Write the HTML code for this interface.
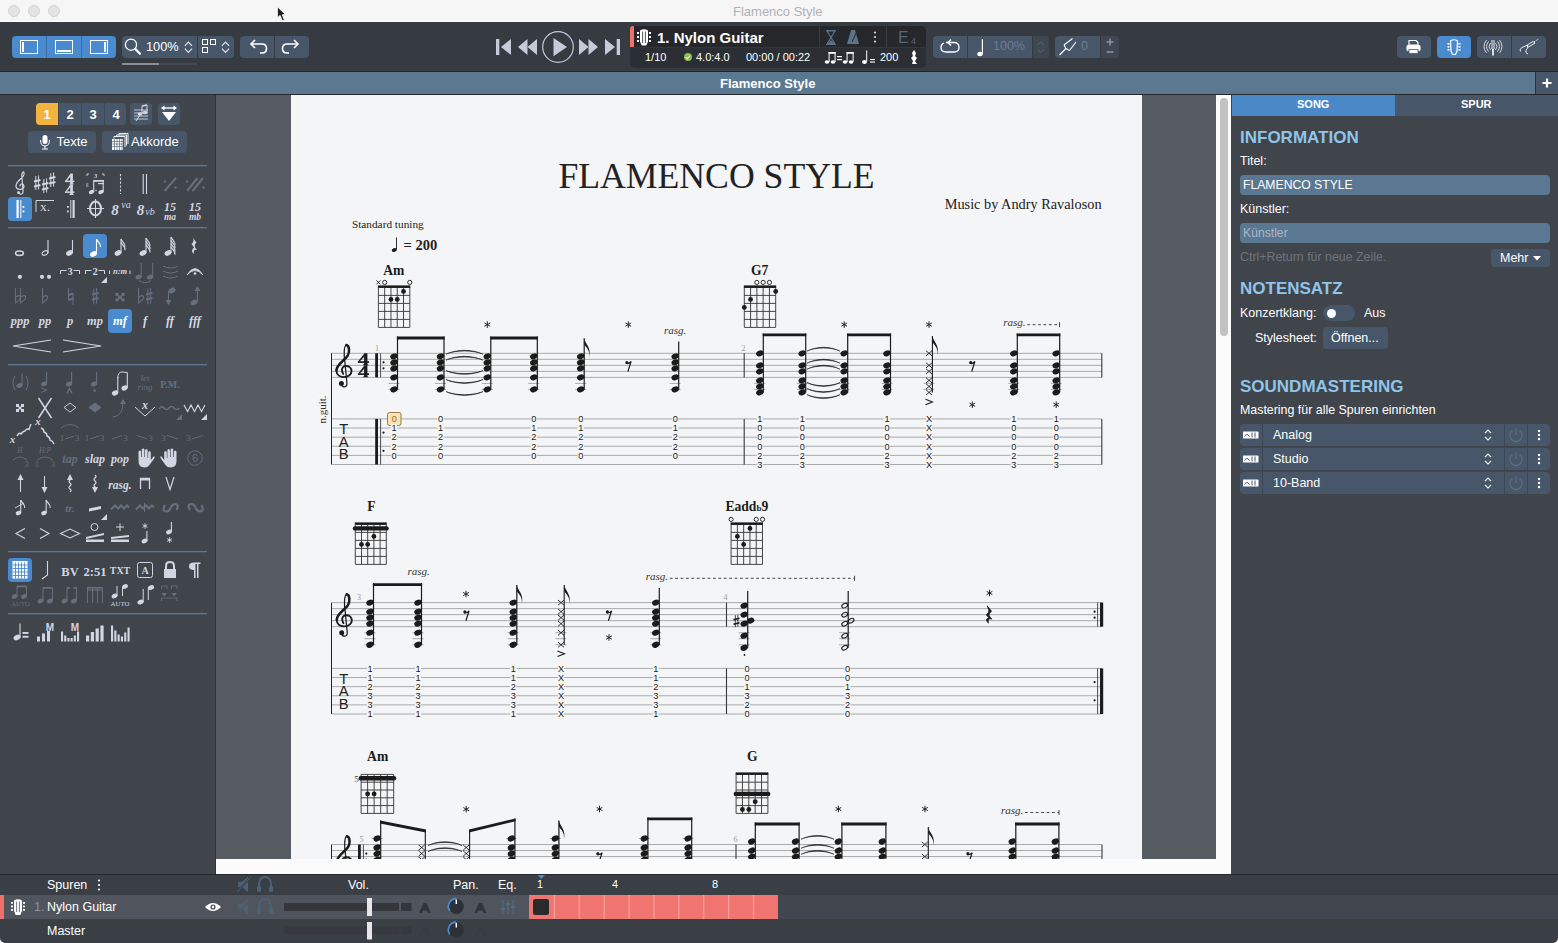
<!DOCTYPE html><html><head><meta charset="utf-8"><style>
*{margin:0;padding:0;box-sizing:border-box}
html,body{width:1558px;height:943px;overflow:hidden;background:#40444b;font-family:"Liberation Sans",sans-serif}
.a{position:absolute}
svg{position:absolute;overflow:visible}
.t{position:absolute;white-space:pre;line-height:1}
</style></head><body>
<div class="a" style="left:0px;top:0px;width:1558px;height:21px;background:#f6f6f7;"></div><div class="a" style="left:0px;top:21px;width:1558px;height:1px;background:#ffffff;"></div><div class="a" style="left:8px;top:5px;width:12px;height:12px;border-radius:50%;background:#e3e3e3;border:1px solid #d3d3d5"></div><div class="a" style="left:28px;top:5px;width:12px;height:12px;border-radius:50%;background:#e3e3e3;border:1px solid #d3d3d5"></div><div class="a" style="left:48px;top:5px;width:12px;height:12px;border-radius:50%;background:#e3e3e3;border:1px solid #d3d3d5"></div><div class="t" style="left:733px;top:5px;font-size:13px;color:#b2b2b8;font-weight:normal;font-family:"Liberation Sans",sans-serif;">Flamenco Style</div><svg style="left:0;top:0" width="1558" height="22" viewBox="0 0 1558 22"><path d="M277.4,6.8 L277.4,17.8 L280.1,15.4 L282.2,20.9 L284.4,20.1 L282.3,14.8 L285.8,14.7 Z" fill="#1f1f1f" stroke="#ffffff" stroke-width="0.9" stroke-linejoin="round"/></svg><div class="a" style="left:0px;top:22px;width:1558px;height:50px;background:#363a41;"></div><div class="a" style="left:0px;top:71px;width:1558px;height:1px;background:#222529;"></div><div class="a" style="left:12px;top:36px;width:104px;height:22px;background:#4a8bd0;border-radius:4px"></div><div class="a" style="left:46px;top:36px;width:1px;height:22px;background:#3a6da6;"></div><div class="a" style="left:81px;top:36px;width:1px;height:22px;background:#3a6da6;"></div><svg style="left:0px;top:0px" width="1558" height="72" viewBox="0 0 1558 72"><rect x="20.5" y="40.5" width="17" height="13" fill="none" stroke="#fff" stroke-width="1"/><rect x="22" y="42" width="2" height="10" fill="#fff"/><rect x="55.5" y="40.5" width="17" height="13" fill="none" stroke="#fff" stroke-width="1"/><rect x="57" y="50" width="14" height="2" fill="#fff"/><rect x="90.5" y="40.5" width="17" height="13" fill="none" stroke="#fff" stroke-width="1"/><rect x="104" y="42" width="2" height="10" fill="#fff"/></svg><div class="a" style="left:122px;top:36px;width:112px;height:22px;background:#485669;border-radius:4px"></div><div class="a" style="left:197px;top:36px;width:1px;height:22px;background:#363a41;"></div><div class="a" style="left:122px;top:63px;width:75px;height:2px;background:#454950;"></div><div class="a" style="left:122px;top:63px;width:37px;height:2px;background:#8a8e96;"></div><div class="a" style="left:240px;top:36px;width:69px;height:22px;background:#485669;border-radius:4px"></div><div class="a" style="left:274px;top:36px;width:1px;height:22px;background:#363a41;"></div><svg style="left:0px;top:0px" width="1558" height="72" viewBox="0 0 1558 72"><circle cx="131" cy="44.7" r="5.6" fill="none" stroke="#fff" stroke-width="1.3"/><line x1="135.2" y1="48.9" x2="140" y2="53.7" stroke="#fff" stroke-width="2.3" stroke-linecap="round"/><polyline points="184.8,45.8 188.4,42 192.0,45.8" fill="none" stroke="#dfe3ea" stroke-width="1.2"/><polyline points="184.8,48.6 188.4,52.4 192.0,48.6" fill="none" stroke="#dfe3ea" stroke-width="1.2"/><polyline points="221.9,45.8 225.5,42 229.1,45.8" fill="none" stroke="#dfe3ea" stroke-width="1.2"/><polyline points="221.9,48.6 225.5,52.4 229.1,48.6" fill="none" stroke="#dfe3ea" stroke-width="1.2"/><rect x="202.5" y="39.5" width="5" height="5" fill="none" stroke="#fff"/><rect x="210.5" y="39.5" width="5" height="5" fill="none" stroke="#fff"/><rect x="202.5" y="47.5" width="5" height="5" fill="none" stroke="#fff"/><path d="M251,44 L262,44 Q266.5,44 266.5,48.5 Q266.5,53 262,53 L260,53" fill="none" stroke="#fff" stroke-width="1.6"/><polyline points="255,40 251,44 255,48" fill="none" stroke="#fff" stroke-width="1.6"/><path d="M298,44 L287,44 Q282.5,44 282.5,48.5 Q282.5,53 287,53 L289,53" fill="none" stroke="#fff" stroke-width="1.6"/><polyline points="294,40 298,44 294,48" fill="none" stroke="#fff" stroke-width="1.6"/></svg><div class="t" style="left:146px;top:41.3px;font-size:12.8px;color:#ffffff;font-weight:normal;font-family:"Liberation Sans",sans-serif;">100%</div><svg style="left:0px;top:0px" width="1558" height="72" viewBox="0 0 1558 72"><rect x="496" y="39" width="3.3" height="16" fill="#c6c9d9"/><polygon points="501,47 511,39 511,55" fill="#c6c9d9"/><polygon points="518,47 527.5,39 527.5,55" fill="#c6c9d9"/><polygon points="527.5,47 537,39 537,55" fill="#c6c9d9"/><circle cx="558" cy="47" r="15.3" fill="none" stroke="#c6c9d9" stroke-width="1.2"/><polygon points="553.5,38 567,47 553.5,56.3" fill="#c6c9d9"/><polygon points="579,39 588.5,47 579,55" fill="#c6c9d9"/><polygon points="588.5,39 598,47 588.5,55" fill="#c6c9d9"/><polygon points="605,39 615,47 605,55" fill="#c6c9d9"/><rect x="616.7" y="39" width="3.3" height="16" fill="#c6c9d9"/></svg><div class="a" style="left:630px;top:26px;width:296px;height:42px;background:#2b2e33;border-radius:5px"></div><div class="a" style="left:630px;top:26px;width:296px;height:22px;background:#25272b;border-radius:5px 5px 0 0"></div><div class="a" style="left:630px;top:26px;width:4px;height:22px;background:#f0706a;border-radius:3px 0 0 0"></div><div class="a" style="left:819px;top:26px;width:1px;height:22px;background:#3a3d43;"></div><div class="a" style="left:886px;top:26px;width:1px;height:22px;background:#3a3d43;"></div><div class="a" style="left:630px;top:47px;width:296px;height:1px;background:#33363c;"></div><svg style="left:0px;top:0px" width="1558" height="72" viewBox="0 0 1558 72"><path d="M640,30.5 Q644,28 648,30.5 L648,41.5 L646.3,45.5 L641.7,45.5 L640,41.5 Z" fill="#fff"/><line x1="642.6" y1="31.5" x2="642.6" y2="43" stroke="#25272b" stroke-width="0.8"/><line x1="645.4" y1="31.5" x2="645.4" y2="43" stroke="#25272b" stroke-width="0.8"/><rect x="637" y="32" width="2" height="2" fill="#fff"/><rect x="649" y="32" width="2" height="2" fill="#fff"/><rect x="637" y="36" width="2" height="2" fill="#fff"/><rect x="649" y="36" width="2" height="2" fill="#fff"/><rect x="637" y="40" width="2" height="2" fill="#fff"/><rect x="649" y="40" width="2" height="2" fill="#fff"/><path d="M826,30.5 L836,30.5 M826,44.5 L836,44.5 M827,31 L835,31 L831,37.5 L835,44 L827,44 L831,37.5 Z" fill="none" stroke="#5d7387" stroke-width="1.2"/><polygon points="827.5,44 831,40 834.5,44" fill="#5d7387"/><polygon points="851,30 855,30 859,44 847,44" fill="#5d7387"/><line x1="852" y1="42" x2="857" y2="31" stroke="#25272b" stroke-width="1"/><circle cx="875" cy="32.5" r="1.1" fill="#d8dbe0"/><circle cx="875" cy="37" r="1.1" fill="#d8dbe0"/><circle cx="875" cy="41.5" r="1.1" fill="#d8dbe0"/><ellipse cx="827" cy="62" rx="2.3" ry="1.8" fill="#fff"/><ellipse cx="833" cy="62" rx="2.3" ry="1.8" fill="#fff"/><rect x="828.6" y="52" width="1" height="10" fill="#fff"/><rect x="834.6" y="52" width="1" height="10" fill="#fff"/><rect x="828.6" y="52" width="7" height="1.8" fill="#fff"/><rect x="837" y="56" width="5" height="1.2" fill="#fff"/><rect x="837" y="59" width="5" height="1.2" fill="#fff"/><ellipse cx="845" cy="62" rx="2.3" ry="1.8" fill="#fff"/><ellipse cx="851" cy="62" rx="2.3" ry="1.8" fill="#fff"/><rect x="846.6" y="52" width="1" height="10" fill="#fff"/><rect x="852.6" y="52" width="1" height="10" fill="#fff"/><rect x="846.6" y="52" width="7" height="1.8" fill="#fff"/><ellipse cx="864.5" cy="62" rx="2.4" ry="1.9" fill="#fff"/><rect x="866.2" y="50.5" width="1" height="11" fill="#fff"/><rect x="870" y="59" width="5" height="1.1" fill="#fff"/><rect x="870" y="61.5" width="5" height="1.1" fill="#fff"/><path d="M914,50 L916,53 L915,56 L917,58 L915,61 L917,64 L912,64 L913,61 L911,58 L913,56 L912,53 Z" fill="#fff"/></svg><div class="t" style="left:657px;top:30px;font-size:15px;color:#fff;font-weight:bold;font-family:"Liberation Sans",sans-serif;">1. Nylon Guitar</div><div class="t" style="left:645px;top:52px;font-size:11px;color:#fff;font-weight:normal;font-family:"Liberation Sans",sans-serif;">1/10</div><div class="a" style="left:683.8px;top:53px;width:8.2px;height:8.2px;border-radius:50%;background:#8dbd50"></div><svg style="left:0px;top:0px" width="1558" height="72" viewBox="0 0 1558 72"><polyline points="685.8,57.2 687.3,58.8 690,55.6" fill="none" stroke="#e9f3dc" stroke-width="1.1"/></svg><div class="t" style="left:696px;top:52px;font-size:11px;color:#fff;font-weight:normal;font-family:"Liberation Sans",sans-serif;">4.0:4.0</div><div class="t" style="left:746px;top:52px;font-size:11px;color:#fff;font-weight:normal;font-family:"Liberation Sans",sans-serif;">00:00 / 00:22</div><div class="t" style="left:880px;top:52px;font-size:11px;color:#fff;font-weight:normal;font-family:"Liberation Sans",sans-serif;">200</div><div class="t" style="left:898px;top:30px;font-size:16px;color:#55657a;font-weight:normal;font-family:"Liberation Sans",sans-serif;">E</div><div class="t" style="left:911px;top:37px;font-size:9px;color:#55657a;font-weight:normal;font-family:"Liberation Sans",sans-serif;">4</div><div class="a" style="left:933px;top:36px;width:116px;height:22px;background:#485669;border-radius:4px"></div><div class="a" style="left:1033px;top:36px;width:16px;height:22px;background:#3f4752;border-radius:0 4px 4px 0"></div><div class="a" style="left:967px;top:36px;width:1px;height:22px;background:#363a41;"></div><div class="a" style="left:1032px;top:36px;width:1px;height:22px;background:#363a41;"></div><div class="a" style="left:1055px;top:36px;width:64px;height:22px;background:#485669;border-radius:4px"></div><div class="a" style="left:1101px;top:36px;width:18px;height:22px;background:#3f4752;border-radius:0 4px 4px 0"></div><div class="a" style="left:1100px;top:36px;width:1px;height:22px;background:#363a41;"></div><svg style="left:0px;top:0px" width="1558" height="72" viewBox="0 0 1558 72"><path d="M946,42.5 L954,42.5 Q959,42.5 959,47.5 Q959,52 954,52 L946,52 Q941,52 941,47.5 Q941,44 944,43" fill="none" stroke="#fff" stroke-width="1.3"/><polyline points="951,39.5 948,42.5 951,45.5" fill="none" stroke="#fff" stroke-width="1.3"/><ellipse cx="980" cy="54" rx="2.7" ry="2.2" fill="#fff"/><rect x="981.8" y="39" width="1.2" height="15" fill="#fff"/><polyline points="1037.5,45 1040.5,42 1043.5,45" fill="none" stroke="#5b6675" stroke-width="1"/><polyline points="1037.5,49.5 1040.5,52.5 1043.5,49.5" fill="none" stroke="#5b6675" stroke-width="1"/><path d="M1059.5,55 L1066,48.5 M1064,45 L1066,48.5 L1069.5,50.5 M1064,45 L1072.5,38.5 M1069.5,50.5 L1076,42" fill="none" stroke="#fff" stroke-width="1.1"/><path d="M1106.5,42 L1113.5,42 M1110,38.5 L1110,45.5 M1106.5,52 L1113.5,52" stroke="#8b96a5" stroke-width="1.6"/></svg><div class="t" style="left:993px;top:40px;font-size:12.5px;color:#6e7d8f;font-weight:normal;font-family:"Liberation Sans",sans-serif;">100%</div><div class="t" style="left:1081px;top:40px;font-size:12.5px;color:#6e7d8f;font-weight:normal;font-family:"Liberation Sans",sans-serif;">0</div><div class="a" style="left:1397px;top:36px;width:34px;height:22px;background:#485669;border-radius:4px"></div><div class="a" style="left:1437px;top:36px;width:34px;height:22px;background:#4a8bd0;border-radius:4px"></div><div class="a" style="left:1477px;top:36px;width:69px;height:22px;background:#485669;border-radius:4px"></div><div class="a" style="left:1511px;top:36px;width:1px;height:22px;background:#363a41;"></div><svg style="left:0px;top:0px" width="1558" height="72" viewBox="0 0 1558 72"><path d="M1409,40.5 L1416,40.5 L1418,42.5 L1418,45 L1409,45 Z" fill="none" stroke="#fff" stroke-width="1.2"/><rect x="1406.5" y="45" width="14" height="6" rx="1.5" fill="#fff"/><rect x="1409" y="49.5" width="9" height="4" fill="#fff" stroke="#485669" stroke-width="0.8"/><path d="M1450.5,41 Q1454,38.5 1457.5,41 L1457,51 L1455.5,54.5 L1452.5,54.5 L1451,51 Z" fill="none" stroke="#fff" stroke-width="1.2"/><rect x="1447.5" y="43" width="2" height="1.6" fill="#fff"/><rect x="1458.5" y="43" width="2" height="1.6" fill="#fff"/><rect x="1447.5" y="46" width="2" height="1.6" fill="#fff"/><rect x="1458.5" y="46" width="2" height="1.6" fill="#fff"/><rect x="1447.5" y="49" width="2" height="1.6" fill="#fff"/><rect x="1458.5" y="49" width="2" height="1.6" fill="#fff"/><path d="M1486.5,40 Q1481.5,46.5 1486.5,53 M1488.5,41.5 Q1484.5,46.5 1488.5,51.5 M1490.5,43 Q1487.5,46.5 1490.5,50 M1499.5,40 Q1504.5,46.5 1499.5,53 M1497.5,41.5 Q1501.5,46.5 1497.5,51.5 M1495.5,43 Q1498.5,46.5 1495.5,50" fill="none" stroke="#fff" stroke-width="0.75"/><path d="M1492,40 L1492,49 Q1493,51 1494,49 L1494,40" fill="none" stroke="#fff" stroke-width="0.9"/><rect x="1492.2" y="50" width="1.6" height="5.5" fill="#fff"/><path d="M1520.5,51.5 Q1519,49 1522,47.5 L1526.5,45.5 Q1529,45 1527.5,48 L1526,50.5 Q1525,53 1528,54" fill="none" stroke="#fff" stroke-width="0.9"/><path d="M1526.5,45.5 L1533,41.5 L1535,43 L1528.5,47 Z" fill="none" stroke="#fff" stroke-width="0.9"/><line x1="1534" y1="42" x2="1538.5" y2="39" stroke="#fff" stroke-width="0.9" stroke-dasharray="1.2,0.8"/></svg><div class="a" style="left:0px;top:72px;width:1535px;height:22px;background:#5b7891;"></div><div class="a" style="left:1535px;top:72px;width:1px;height:22px;background:#2e3238;"></div><div class="a" style="left:1536px;top:72px;width:22px;height:22px;background:#48566a;"></div><div class="a" style="left:0px;top:94px;width:1558px;height:1px;background:#23262a;"></div><div class="t" style="left:720px;top:77px;font-size:13px;color:#ffffff;font-weight:bold;font-family:"Liberation Sans",sans-serif;">Flamenco Style</div><svg style="left:0px;top:0px" width="1558" height="95" viewBox="0 0 1558 95"><path d="M1542.5,83 L1551.5,83 M1547,78.5 L1547,87.5" stroke="#fff" stroke-width="2.2"/></svg><div class="a" style="left:0px;top:95px;width:215px;height:779px;background:#40444b;"></div><div class="a" style="left:215px;top:95px;width:1px;height:779px;background:#2f3237;"></div><svg style="left:0;top:0" width="1558" height="943" viewBox="0 0 1558 943"><rect x="36" y="103" width="90" height="22" rx="4" fill="#485669"/><path d="M40,103 L58,103 L58,125 L40,125 Q36,125 36,121 L36,107 Q36,103 40,103 Z" fill="#f2b43f"/><rect x="58" y="103" width="1" height="22" rx="0" fill="#3d4756"/><rect x="81" y="103" width="1" height="22" rx="0" fill="#3d4756"/><rect x="104" y="103" width="1" height="22" rx="0" fill="#3d4756"/><text x="47" y="119" font-family="Liberation Sans" font-size="13" font-weight="bold" font-style="normal" fill="#fff" text-anchor="middle" >1</text><text x="70" y="119" font-family="Liberation Sans" font-size="13" font-weight="bold" font-style="normal" fill="#fff" text-anchor="middle" >2</text><text x="93" y="119" font-family="Liberation Sans" font-size="13" font-weight="bold" font-style="normal" fill="#fff" text-anchor="middle" >3</text><text x="116" y="119" font-family="Liberation Sans" font-size="13" font-weight="bold" font-style="normal" fill="#fff" text-anchor="middle" >4</text><rect x="130" y="103" width="22" height="22" rx="4" fill="#485669"/><rect x="158" y="103" width="22" height="22" rx="4" fill="#485669"/><line x1="134" y1="110" x2="148" y2="110" stroke="#d3d6e2" stroke-width="0.9"/><line x1="134" y1="113" x2="148" y2="113" stroke="#d3d6e2" stroke-width="0.9"/><line x1="134" y1="116" x2="148" y2="116" stroke="#d3d6e2" stroke-width="0.9"/><line x1="134" y1="119" x2="148" y2="119" stroke="#d3d6e2" stroke-width="0.9"/><ellipse cx="140" cy="114" rx="2.4" ry="1.8" fill="#d3d6e2"/><ellipse cx="145" cy="112.5" rx="2.4" ry="1.8" fill="#d3d6e2"/><line x1="142" y1="106" x2="142" y2="114" stroke="#d3d6e2" stroke-width="1"/><line x1="147" y1="105" x2="147" y2="112.5" stroke="#d3d6e2" stroke-width="1"/><line x1="142" y1="106" x2="147" y2="105" stroke="#d3d6e2" stroke-width="1.6"/><line x1="136" y1="121" x2="140" y2="115" stroke="#d3d6e2" stroke-width="1"/><line x1="162" y1="108" x2="176" y2="108" stroke="#fff" stroke-width="1.4"/><polygon points="161,108 164.5,105.5 164.5,110.5" fill="#fff"/><polygon points="177,108 173.5,105.5 173.5,110.5" fill="#fff"/><polygon points="162,112 176,112 169,121" fill="#fff"/><rect x="28" y="131" width="68" height="22" rx="4" fill="#485669"/><rect x="102" y="131" width="85" height="22" rx="4" fill="#485669"/><rect x="42.5" y="135" width="5" height="9" rx="2.5" fill="#fff"/><path d="M40.5,140 Q40.5,146 45,146 Q49.5,146 49.5,140" fill="none" stroke="#fff" stroke-width="1"/><line x1="45" y1="146" x2="45" y2="149" stroke="#fff"/><line x1="42" y1="149" x2="48" y2="149" stroke="#fff"/><text x="56.5" y="146" font-family="Liberation Sans" font-size="13" font-weight="normal" font-style="normal" fill="#fff" text-anchor="start" >Texte</text><rect x="112" y="139" width="11" height="11" fill="#fff"/><path d="M114.0,138.5 L114.0,136.5 L125.0,136.5 L125.0,147.0" fill="none" stroke="#fff" stroke-width="0.9"/><path d="M116.5,137.0 L116.5,135.0 L126.5,135.0 L126.5,145.5" fill="none" stroke="#fff" stroke-width="0.9"/><path d="M119.0,135.5 L119.0,133.5 L128.0,133.5 L128.0,144.0" fill="none" stroke="#fff" stroke-width="0.9"/><line x1="112" y1="141.5" x2="123" y2="141.5" stroke="#485669" stroke-width="0.6"/><line x1="112" y1="144" x2="123" y2="144" stroke="#485669" stroke-width="0.6"/><line x1="112" y1="146.5" x2="123" y2="146.5" stroke="#485669" stroke-width="0.6"/><line x1="114.5" y1="139" x2="114.5" y2="150" stroke="#485669" stroke-width="0.6"/><line x1="117" y1="139" x2="117" y2="150" stroke="#485669" stroke-width="0.6"/><line x1="119.5" y1="139" x2="119.5" y2="150" stroke="#485669" stroke-width="0.6"/><line x1="122" y1="139" x2="122" y2="150" stroke="#485669" stroke-width="0.6"/><text x="131" y="146" font-family="Liberation Sans" font-size="13" font-weight="normal" font-style="normal" fill="#fff" text-anchor="start" >Akkorde</text><rect x="8" y="165" width="199" height="1.3" fill="#5b7894"/><path d="M18.5,192 C19,195 23.5,195 23,191 L21.8,176 C21.5,172 24.5,170 24,174.5 C23.5,178 16,180.5 16,186 C16,190.5 24.5,190.5 24,186 C23.5,183 19.5,183.5 20,186.5" fill="none" stroke="#d3d6e2" stroke-width="1.2"/><circle cx="18.5" cy="192.5" r="1.5" fill="#d3d6e2"/><g stroke="#d3d6e2"><line x1="35.8" y1="176" x2="35.8" y2="190" stroke-width="1"/><line x1="38.6" y1="175.5" x2="38.6" y2="189.5" stroke-width="1"/><line x1="34" y1="181.5" x2="40.4" y2="180" stroke-width="1.8"/><line x1="34" y1="186.5" x2="40.4" y2="185" stroke-width="1.8"/></g><g stroke="#d3d6e2"><line x1="43.8" y1="179" x2="43.8" y2="193" stroke-width="1"/><line x1="46.6" y1="178.5" x2="46.6" y2="192.5" stroke-width="1"/><line x1="42" y1="184.5" x2="48.4" y2="183" stroke-width="1.8"/><line x1="42" y1="189.5" x2="48.4" y2="188" stroke-width="1.8"/></g><g stroke="#d3d6e2"><line x1="50.8" y1="173" x2="50.8" y2="187" stroke-width="1"/><line x1="53.6" y1="172.5" x2="53.6" y2="186.5" stroke-width="1"/><line x1="49" y1="178.5" x2="55.4" y2="177" stroke-width="1.8"/><line x1="49" y1="183.5" x2="55.4" y2="182" stroke-width="1.8"/></g><path d="M70.2,173.5 L72.9,173.5 L72.9,183.3 L74.3,184.3 L68.8,184.3 L70.2,183.3 Z" fill="#d3d6e2"/><path d="M70.4,173.7 L71.3,175.5 L66.6,181.0 L65.2,181.0 Z" fill="#d3d6e2"/><rect x="65" y="180.6" width="9.4" height="1.5" fill="#d3d6e2"/><path d="M70.2,184.3 L72.9,184.3 L72.9,194.10000000000002 L74.3,195.10000000000002 L68.8,195.10000000000002 L70.2,194.10000000000002 Z" fill="#d3d6e2"/><path d="M70.4,184.5 L71.3,186.3 L66.6,191.8 L65.2,191.8 Z" fill="#d3d6e2"/><rect x="65" y="191.4" width="9.4" height="1.5" fill="#d3d6e2"/><path d="M87,176 L87,174 L89,174 M104,176 L104,174 L102,174" fill="none" stroke="#d3d6e2" stroke-width="0.9"/><text x="95.5" y="178" font-family="Liberation Serif" font-size="6.5" font-weight="bold" font-style="italic" fill="#d3d6e2" text-anchor="middle" >3</text><line x1="86" y1="184" x2="88.5" y2="184" stroke="#d3d6e2" stroke-width="0.8"/><line x1="86" y1="186" x2="88.5" y2="186" stroke="#d3d6e2" stroke-width="0.8"/><ellipse cx="91.5" cy="192" rx="2.8" ry="2.0" transform="rotate(-25 91.5 192)" fill="#d3d6e2"/><line x1="93.7" y1="180" x2="93.7" y2="192" stroke="#d3d6e2" stroke-width="1.1"/><ellipse cx="101" cy="192" rx="2.8" ry="2.0" transform="rotate(-25 101 192)" fill="#d3d6e2"/><line x1="103.2" y1="180" x2="103.2" y2="192" stroke="#d3d6e2" stroke-width="1.1"/><rect x="93.8" y="180" width="10" height="1.8" rx="0" fill="#d3d6e2"/><rect x="98" y="183" width="5.8" height="1.2" rx="0" fill="#d3d6e2"/><circle cx="96" cy="190.5" r="0.7" fill="#d3d6e2"/><line x1="120.5" y1="174" x2="120.5" y2="194" stroke="#d3d6e2" stroke-width="1.1" stroke-dasharray="2.2,1.6"/><line x1="143.2" y1="174" x2="143.2" y2="194" stroke="#d3d6e2" stroke-width="1.1"/><line x1="146.5" y1="174" x2="146.5" y2="194" stroke="#d3d6e2" stroke-width="1.1"/><circle cx="165" cy="181.5" r="1.2" fill="#66707d"/><circle cx="175.5" cy="187.5" r="1.2" fill="#66707d"/><line x1="164.5" y1="191" x2="176" y2="178" stroke="#66707d" stroke-width="2"/><circle cx="187" cy="181.5" r="1.2" fill="#66707d"/><circle cx="203.5" cy="187.5" r="1.2" fill="#66707d"/><line x1="187" y1="191" x2="197.5" y2="178" stroke="#66707d" stroke-width="2"/><line x1="192.5" y1="191" x2="203" y2="178" stroke="#66707d" stroke-width="2"/><rect x="8" y="197" width="24" height="24" rx="4" fill="#4a8bd0"/><rect x="16.5" y="200" width="2.2" height="18" rx="0" fill="#fff"/><line x1="20.8" y1="200" x2="20.8" y2="218" stroke="#fff" stroke-width="1"/><rect x="22.5" y="206" width="1.8" height="1.8" fill="#fff"/><rect x="22.5" y="210.5" width="1.8" height="1.8" fill="#fff"/><path d="M36,212 L36,200.5 L54,200.5" fill="none" stroke="#d3d6e2" stroke-width="1"/><text x="45" y="210.5" font-family="Liberation Serif" font-size="13.5" font-weight="normal" font-style="normal" fill="#d3d6e2" text-anchor="middle" >x.</text><rect x="67" y="206" width="1.8" height="1.8" fill="#d3d6e2"/><rect x="67" y="210.5" width="1.8" height="1.8" fill="#d3d6e2"/><line x1="70.8" y1="200" x2="70.8" y2="218" stroke="#d3d6e2" stroke-width="1"/><rect x="72.5" y="200" width="2.2" height="18" rx="0" fill="#d3d6e2"/><ellipse cx="95.5" cy="208.5" rx="5.5" ry="7" fill="none" stroke="#d3d6e2" stroke-width="2"/><line x1="87" y1="208.5" x2="104" y2="208.5" stroke="#d3d6e2" stroke-width="1"/><line x1="95.5" y1="199" x2="95.5" y2="218" stroke="#d3d6e2" stroke-width="1"/><text x="115" y="215" font-family="Liberation Serif" font-size="15" font-weight="bold" font-style="italic" fill="#d3d6e2" text-anchor="middle" >8</text><text x="126" y="208" font-family="Liberation Serif" font-size="10" font-weight="normal" font-style="italic" fill="#d3d6e2" text-anchor="middle" >va</text><text x="140.5" y="215" font-family="Liberation Serif" font-size="15" font-weight="bold" font-style="italic" fill="#d3d6e2" text-anchor="middle" >8</text><text x="150" y="215" font-family="Liberation Serif" font-size="10" font-weight="normal" font-style="italic" fill="#d3d6e2" text-anchor="middle" >vb</text><text x="170" y="210.5" font-family="Liberation Serif" font-size="12" font-weight="bold" font-style="italic" fill="#d3d6e2" text-anchor="middle" >15</text><text x="170" y="220" font-family="Liberation Serif" font-size="9.5" font-weight="bold" font-style="italic" fill="#d3d6e2" text-anchor="middle" >ma</text><text x="195" y="210.5" font-family="Liberation Serif" font-size="12" font-weight="bold" font-style="italic" fill="#d3d6e2" text-anchor="middle" >15</text><text x="195" y="220" font-family="Liberation Serif" font-size="9.5" font-weight="bold" font-style="italic" fill="#d3d6e2" text-anchor="middle" >mb</text><rect x="8" y="227" width="199" height="1.3" fill="#5b7894"/><ellipse cx="19.5" cy="253.2" rx="3.9" ry="2.2" fill="none" stroke="#d3d6e2" stroke-width="1.6"/><ellipse cx="45" cy="253" rx="3.1" ry="2.0" transform="rotate(-25 45 253)" fill="none" stroke="#d3d6e2" stroke-width="1.1"/><line x1="48.0" y1="240" x2="48.0" y2="253" stroke="#d3d6e2" stroke-width="1.1"/><ellipse cx="69.5" cy="253" rx="3.6" ry="2.6" transform="rotate(-25 69.5 253)" fill="#d3d6e2"/><line x1="72.5" y1="240" x2="72.5" y2="253" stroke="#d3d6e2" stroke-width="1.1"/><rect x="83" y="234" width="24" height="24" rx="4" fill="#4a8bd0"/><ellipse cx="93.5" cy="254" rx="3.6" ry="2.6" transform="rotate(-25 93.5 254)" fill="#fff"/><line x1="96.5" y1="239" x2="96.5" y2="254" stroke="#fff" stroke-width="1.1"/><path d="M96.5,239.0 C97.5,242.0 101.0,243.0 100.5,247.0" fill="none" stroke="#fff" stroke-width="1.2"/><ellipse cx="118" cy="253" rx="3.6" ry="2.6" transform="rotate(-25 118 253)" fill="#d3d6e2"/><line x1="121.0" y1="239" x2="121.0" y2="253" stroke="#d3d6e2" stroke-width="1.1"/><path d="M121.0,239.0 C122.0,242.0 125.5,243.0 125.0,247.0" fill="none" stroke="#d3d6e2" stroke-width="1.2"/><path d="M121.0,242.2 C122.0,245.2 125.5,246.2 125.0,250.2" fill="none" stroke="#d3d6e2" stroke-width="1.2"/><ellipse cx="143" cy="253" rx="3.6" ry="2.6" transform="rotate(-25 143 253)" fill="#d3d6e2"/><line x1="146.0" y1="238" x2="146.0" y2="253" stroke="#d3d6e2" stroke-width="1.1"/><path d="M146.0,238.0 C147.0,241.0 150.5,242.0 150.0,246.0" fill="none" stroke="#d3d6e2" stroke-width="1.2"/><path d="M146.0,241.2 C147.0,244.2 150.5,245.2 150.0,249.2" fill="none" stroke="#d3d6e2" stroke-width="1.2"/><path d="M146.0,244.4 C147.0,247.4 150.5,248.4 150.0,252.4" fill="none" stroke="#d3d6e2" stroke-width="1.2"/><ellipse cx="168" cy="253" rx="3.6" ry="2.6" transform="rotate(-25 168 253)" fill="#d3d6e2"/><line x1="171.0" y1="237" x2="171.0" y2="253" stroke="#d3d6e2" stroke-width="1.1"/><path d="M171.0,237.0 C172.0,240.0 175.5,241.0 175.0,245.0" fill="none" stroke="#d3d6e2" stroke-width="1.2"/><path d="M171.0,240.2 C172.0,243.2 175.5,244.2 175.0,248.2" fill="none" stroke="#d3d6e2" stroke-width="1.2"/><path d="M171.0,243.4 C172.0,246.4 175.5,247.4 175.0,251.4" fill="none" stroke="#d3d6e2" stroke-width="1.2"/><path d="M171.0,246.6 C172.0,249.6 175.5,250.6 175.0,254.6" fill="none" stroke="#d3d6e2" stroke-width="1.2"/><path d="M193,238 L196.5,242.5 Q193.5,245 195.5,248 L197,250 Q193,249 194,254 Q190,251 194,247.5 L191.5,244 Q194.5,241.5 193,238 Z" fill="#d3d6e2"/><circle cx="19.9" cy="276.8" r="2.1" fill="#d3d6e2"/><circle cx="42" cy="276.8" r="2.1" fill="#d3d6e2"/><circle cx="49" cy="276.8" r="2.1" fill="#d3d6e2"/><path d="M60.5,274 L60.5,270.5 L66.5,270.5 M73.5,270.5 L79.5,270.5 L79.5,274" fill="none" stroke="#d3d6e2" stroke-width="1"/><text x="70" y="274.8" font-family="Liberation Serif" font-size="10.5" font-weight="bold" font-style="normal" fill="#d3d6e2" text-anchor="middle" >3</text><path d="M85.5,274 L85.5,270.5 L91.5,270.5 M98.5,270.5 L104.5,270.5 L104.5,274" fill="none" stroke="#d3d6e2" stroke-width="1"/><text x="95" y="274.8" font-family="Liberation Serif" font-size="10.5" font-weight="bold" font-style="normal" fill="#d3d6e2" text-anchor="middle" >2</text><polygon points="101,283 107,283 107,277" fill="#d3d6e2"/><path d="M109.5,274 L109.5,270.5 M130,270.5 L130,274" fill="none" stroke="#d3d6e2" stroke-width="1"/><text x="120" y="274" font-family="Liberation Serif" font-size="8.5" font-weight="bold" font-style="italic" fill="#d3d6e2" text-anchor="middle" >n:m</text><ellipse cx="138.5" cy="277" rx="3.2" ry="2.3" transform="rotate(-25 138.5 277)" fill="#66707d"/><line x1="141.2" y1="263" x2="141.2" y2="277" stroke="#66707d" stroke-width="1"/><ellipse cx="150" cy="277" rx="3.2" ry="2.3" transform="rotate(-25 150 277)" fill="#66707d"/><line x1="152.7" y1="263" x2="152.7" y2="277" stroke="#66707d" stroke-width="1"/><path d="M139,280.5 Q145,285 151,280.5" fill="none" stroke="#66707d" stroke-width="1"/><path d="M163,266 Q170.5,270 178,266" fill="none" stroke="#66707d" stroke-width="1"/><path d="M163,271 Q170.5,275 178,271" fill="none" stroke="#66707d" stroke-width="1"/><path d="M163,276 Q170.5,280 178,276" fill="none" stroke="#66707d" stroke-width="1"/><path d="M187,275 Q195,262 203,275 Q195,266 187,275 Z" fill="#d3d6e2" stroke="#d3d6e2" stroke-width="0.8"/><circle cx="195" cy="273.5" r="1.3" fill="#d3d6e2"/><path d="M15.5,288 L15.5,303 Q21.5,299 20.5,296.5 Q19.5,294.5 15.5,297" fill="none" stroke="#66707d" stroke-width="1.1"/><path d="M20.5,288 L20.5,303 Q26.5,299 25.5,296.5 Q24.5,294.5 20.5,297" fill="none" stroke="#66707d" stroke-width="1.1"/><path d="M42.5,288 L42.5,303 Q48.5,299 47.5,296.5 Q46.5,294.5 42.5,297" fill="none" stroke="#66707d" stroke-width="1.1"/><path d="M68.5,288 L68.5,300 L73,298.5 M68.5,295 L73,293.5 L73,305" fill="none" stroke="#66707d" stroke-width="1.1"/><line x1="68.5" y1="295" x2="73" y2="293.5" stroke="#66707d" stroke-width="2"/><line x1="68.5" y1="300" x2="73" y2="298.5" stroke="#66707d" stroke-width="2"/><g stroke="#66707d"><line x1="93.8" y1="288.5" x2="93.8" y2="304.5" stroke-width="1"/><line x1="96.6" y1="288.0" x2="96.6" y2="304.0" stroke-width="1"/><line x1="92" y1="294.5" x2="98.4" y2="293.0" stroke-width="1.8"/><line x1="92" y1="299.5" x2="98.4" y2="298.0" stroke-width="1.8"/></g><g fill="#66707d"><rect x="115.5" y="293" width="3" height="3"/><rect x="121.5" y="293" width="3" height="3"/><rect x="115.5" y="298.5" width="3" height="3"/><rect x="121.5" y="298.5" width="3" height="3"/><rect x="118" y="295.5" width="4" height="3.5"/></g><path d="M138.5,288 L138.5,303 Q144.5,299 143.5,296.5 Q142.5,294.5 138.5,297" fill="none" stroke="#66707d" stroke-width="1.1"/><g stroke="#66707d"><line x1="147.8" y1="288.5" x2="147.8" y2="304.5" stroke-width="1"/><line x1="150.6" y1="288.0" x2="150.6" y2="304.0" stroke-width="1"/><line x1="146" y1="294.5" x2="152.4" y2="293.0" stroke-width="1.8"/><line x1="146" y1="299.5" x2="152.4" y2="298.0" stroke-width="1.8"/></g><ellipse cx="172" cy="290.5" rx="3.6" ry="2.6" transform="rotate(-25 172 290.5)" fill="#66707d"/><line x1="168.5" y1="291" x2="168.5" y2="303" stroke="#66707d" stroke-width="1.1"/><polygon points="165.5,300 171.5,300 168.5,305" fill="#66707d"/><ellipse cx="194" cy="302.5" rx="3.6" ry="2.6" transform="rotate(-25 194 302.5)" fill="#66707d"/><line x1="197.4" y1="289" x2="197.4" y2="302" stroke="#66707d" stroke-width="1.1"/><polygon points="194.4,291 200.4,291 197.4,286" fill="#66707d"/><rect x="108" y="309" width="24" height="24" rx="4" fill="#4a8bd0"/><text x="20" y="324.5" font-family="Liberation Serif" font-size="12.5" font-weight="bold" font-style="italic" fill="#d3d6e2" text-anchor="middle" >ppp</text><text x="45" y="324.5" font-family="Liberation Serif" font-size="12.5" font-weight="bold" font-style="italic" fill="#d3d6e2" text-anchor="middle" >pp</text><text x="70" y="324.5" font-family="Liberation Serif" font-size="12.5" font-weight="bold" font-style="italic" fill="#d3d6e2" text-anchor="middle" >p</text><text x="95" y="324.5" font-family="Liberation Serif" font-size="12.5" font-weight="bold" font-style="italic" fill="#d3d6e2" text-anchor="middle" >mp</text><text x="120" y="324.5" font-family="Liberation Serif" font-size="12.5" font-weight="bold" font-style="italic" fill="#fff" text-anchor="middle" >mf</text><text x="145" y="324.5" font-family="Liberation Serif" font-size="12.5" font-weight="bold" font-style="italic" fill="#d3d6e2" text-anchor="middle" >f</text><text x="170" y="324.5" font-family="Liberation Serif" font-size="12.5" font-weight="bold" font-style="italic" fill="#d3d6e2" text-anchor="middle" >ff</text><text x="195" y="324.5" font-family="Liberation Serif" font-size="12.5" font-weight="bold" font-style="italic" fill="#d3d6e2" text-anchor="middle" >fff</text><polyline points="51,340 13,346 51,352" fill="none" stroke="#d3d6e2" stroke-width="1.1"/><polyline points="63,340 101,346 63,352" fill="none" stroke="#d3d6e2" stroke-width="1.1"/><rect x="8" y="364" width="199" height="1.3" fill="#5b7894"/><path d="M15,376 Q11,383 15,390 M26,376 Q30,383 26,390" fill="none" stroke="#66707d" stroke-width="1"/><ellipse cx="19.5" cy="385.5" rx="3.2" ry="2.3" transform="rotate(-25 19.5 385.5)" fill="#66707d"/><line x1="22.099999999999998" y1="373.5" x2="22.099999999999998" y2="385.5" stroke="#66707d" stroke-width="1.1"/><ellipse cx="44" cy="384" rx="3.2" ry="2.3" transform="rotate(-25 44 384)" fill="#66707d"/><line x1="46.6" y1="372" x2="46.6" y2="384" stroke="#66707d" stroke-width="1.1"/><polyline points="41,388 47,390 41,392.5" fill="none" stroke="#66707d" stroke-width="1"/><ellipse cx="69" cy="384" rx="3.2" ry="2.3" transform="rotate(-25 69 384)" fill="#66707d"/><line x1="71.60000000000001" y1="372" x2="71.60000000000001" y2="384" stroke="#66707d" stroke-width="1.1"/><polyline points="67,393.5 69.5,388.5 72,393.5" fill="none" stroke="#66707d" stroke-width="1.4"/><ellipse cx="94" cy="384" rx="3.2" ry="2.3" transform="rotate(-25 94 384)" fill="#66707d"/><line x1="96.60000000000001" y1="372" x2="96.60000000000001" y2="384" stroke="#66707d" stroke-width="1.1"/><circle cx="94.5" cy="390.5" r="1.3" fill="#66707d"/><ellipse cx="115" cy="393" rx="3.2" ry="2.4" transform="rotate(-25 115 393)" fill="#d3d6e2"/><ellipse cx="124.5" cy="388" rx="3.2" ry="2.4" transform="rotate(-25 124.5 388)" fill="#d3d6e2"/><line x1="117.8" y1="377" x2="117.8" y2="393" stroke="#d3d6e2" stroke-width="1.1"/><line x1="127.3" y1="372.5" x2="127.3" y2="388" stroke="#d3d6e2" stroke-width="1.1"/><path d="M117.8,378 Q117.8,372 122,372 L127.3,372.5" fill="none" stroke="#d3d6e2" stroke-width="1"/><text x="145" y="381" font-family="Liberation Serif" font-size="9" font-weight="normal" font-style="italic" fill="#66707d" text-anchor="middle" >let</text><text x="145" y="390" font-family="Liberation Serif" font-size="9" font-weight="normal" font-style="italic" fill="#66707d" text-anchor="middle" >ring</text><text x="170" y="388" font-family="Liberation Serif" font-size="10" font-weight="bold" font-style="normal" fill="#66707d" text-anchor="middle" >P.M.</text><g fill="#d3d6e2"><rect x="16" y="404" width="3" height="3"/><rect x="21" y="404" width="3" height="3"/><rect x="16" y="409" width="3" height="3"/><rect x="21" y="409" width="3" height="3"/><rect x="18.5" y="406.5" width="3" height="3"/></g><path d="M38.5,398 L51.5,418 M51.5,398 L38.5,418" stroke="#d3d6e2" stroke-width="1.5"/><polygon points="70,403 76,407.5 70,412 64,407.5" fill="none" stroke="#d3d6e2" stroke-width="0.9"/><polygon points="95,402.5 101.5,407.5 95,412.5 88.5,407.5" fill="#66707d"/><path d="M113,417 Q123,416 123,403" fill="none" stroke="#66707d" stroke-width="1"/><polygon points="120,404 126,404 123,399" fill="#66707d"/><text x="145" y="408.5" font-family="Liberation Serif" font-size="12" font-weight="bold" font-style="italic" fill="#d3d6e2" text-anchor="middle" >x</text><polyline points="135,407 145,416 155,407" fill="none" stroke="#d3d6e2" stroke-width="1"/><path d="M159,409 Q161.5,405 164,408 Q166.5,411 169,408 Q171.5,405 174,408 Q176.5,411 179.5,408" fill="none" stroke="#66707d" stroke-width="1.6"/><polygon points="176,420 182,420 182,414" fill="#66707d"/><polyline points="184,405 187.5,411.5 191,405 194.5,411.5 198,405 201.5,411.5 205,405" fill="none" stroke="#d3d6e2" stroke-width="1.1"/><polygon points="201,420 207,420 207,414" fill="#d3d6e2"/><text x="12.5" y="443" font-family="Liberation Serif" font-size="11" font-weight="bold" font-style="italic" fill="#d3d6e2" text-anchor="middle" >x</text><path d="M17,436 Q19,432 21,434 Q23,431 25,431 Q27,428 29,429.5 Q30,426 31,424" fill="none" stroke="#d3d6e2" stroke-width="1.4"/><text x="38" y="424.5" font-family="Liberation Serif" font-size="11" font-weight="bold" font-style="italic" fill="#d3d6e2" text-anchor="middle" >x</text><path d="M41,428 Q44,429 44,432 Q47,433 47,436 Q50,437 50,440 Q53,441 54,444" fill="none" stroke="#d3d6e2" stroke-width="1.4"/><path d="M61,428 Q70,421 79,428" fill="none" stroke="#66707d" stroke-width="0.9"/><text x="62" y="441" font-family="Liberation Serif" font-size="9" font-weight="normal" font-style="normal" fill="#66707d" text-anchor="middle" >1</text><line x1="65" y1="439" x2="74" y2="436" stroke="#66707d" stroke-width="0.9"/><text x="77" y="441" font-family="Liberation Serif" font-size="9" font-weight="normal" font-style="normal" fill="#66707d" text-anchor="middle" >3</text><text x="87" y="441" font-family="Liberation Serif" font-size="9" font-weight="normal" font-style="normal" fill="#66707d" text-anchor="middle" >1</text><line x1="90" y1="439" x2="99" y2="436" stroke="#66707d" stroke-width="0.9"/><text x="102" y="441" font-family="Liberation Serif" font-size="9" font-weight="normal" font-style="normal" fill="#66707d" text-anchor="middle" >3</text><line x1="112" y1="439" x2="122" y2="435.5" stroke="#66707d" stroke-width="0.9"/><text x="125.5" y="441" font-family="Liberation Serif" font-size="9" font-weight="normal" font-style="normal" fill="#66707d" text-anchor="middle" >3</text><line x1="137" y1="435.5" x2="147" y2="439" stroke="#66707d" stroke-width="0.9"/><text x="150.5" y="441" font-family="Liberation Serif" font-size="9" font-weight="normal" font-style="normal" fill="#66707d" text-anchor="middle" >3</text><text x="163.5" y="441" font-family="Liberation Serif" font-size="9" font-weight="normal" font-style="normal" fill="#66707d" text-anchor="middle" >3</text><line x1="167" y1="435.5" x2="178" y2="439" stroke="#66707d" stroke-width="0.9"/><text x="188.5" y="441" font-family="Liberation Serif" font-size="9" font-weight="normal" font-style="normal" fill="#66707d" text-anchor="middle" >3</text><line x1="192" y1="439" x2="203" y2="435.5" stroke="#66707d" stroke-width="0.9"/><text x="20" y="452.5" font-family="Liberation Serif" font-size="7.5" font-weight="normal" font-style="italic" fill="#66707d" text-anchor="middle" >H</text><path d="M13,460 Q20,454 27,460" fill="none" stroke="#66707d" stroke-width="0.9"/><text x="26.5" y="467" font-family="Liberation Serif" font-size="8" font-weight="normal" font-style="normal" fill="#66707d" text-anchor="middle" >3</text><text x="45" y="452.5" font-family="Liberation Serif" font-size="7.5" font-weight="normal" font-style="italic" fill="#66707d" text-anchor="middle" >H/P</text><path d="M37,460 Q45,454 53,460" fill="none" stroke="#66707d" stroke-width="0.9"/><text x="37" y="467" font-family="Liberation Serif" font-size="8" font-weight="normal" font-style="normal" fill="#66707d" text-anchor="middle" >1</text><text x="53" y="467" font-family="Liberation Serif" font-size="8" font-weight="normal" font-style="normal" fill="#66707d" text-anchor="middle" >3</text><text x="70" y="463" font-family="Liberation Serif" font-size="12" font-weight="bold" font-style="italic" fill="#66707d" text-anchor="middle" >tap</text><text x="95" y="462.5" font-family="Liberation Serif" font-size="12" font-weight="bold" font-style="italic" fill="#d3d6e2" text-anchor="middle" >slap</text><text x="120" y="462.5" font-family="Liberation Serif" font-size="12" font-weight="bold" font-style="italic" fill="#d3d6e2" text-anchor="middle" >pop</text><path d="M138.5,458 L138.5,452 Q138.5,450.5 139.9,450.5 Q141.1,450.5 141.1,452 L141.1,457 L141.8,457 L141.8,449.8 Q141.8,448.5 143.1,448.5 Q144.4,448.5 144.4,449.8 L144.4,457 L145.0,457 L145.0,450.5 Q145.0,449 146.3,449 Q147.6,449 147.6,450.5 L147.6,458 L148.2,458 L148.2,452.5 Q148.2,451.2 149.5,451.2 Q150.8,451.2 150.8,452.5 L150.8,460 L153.5,456.5 Q155.0,455.5 154.5,458 L149.5,465 Q147.5,467.5 144.5,467.5 Q138.5,467.5 138.5,461 Z" fill="#d3d6e2"/><path d="M176.5,458 L176.5,452 Q176.5,450.5 175.1,450.5 Q173.9,450.5 173.9,452 L173.9,457 L173.2,457 L173.2,449.8 Q173.2,448.5 171.9,448.5 Q170.6,448.5 170.6,449.8 L170.6,457 L170.0,457 L170.0,450.5 Q170.0,449 168.7,449 Q167.4,449 167.4,450.5 L167.4,458 L166.8,458 L166.8,452.5 Q166.8,451.2 165.5,451.2 Q164.2,451.2 164.2,452.5 L164.2,460 L161.5,456.5 Q160.0,455.5 160.5,458 L165.5,465 Q167.5,467.5 170.5,467.5 Q176.5,467.5 176.5,461 Z" fill="#d3d6e2"/><circle cx="195" cy="458" r="7.3" fill="none" stroke="#66707d" stroke-width="0.9"/><text x="195" y="462" font-family="Liberation Sans" font-size="11" font-weight="normal" font-style="normal" fill="#66707d" text-anchor="middle" >6</text><line x1="20.5" y1="476" x2="20.5" y2="492" stroke="#d3d6e2" stroke-width="1.1"/><polygon points="17.5,480 23.5,480 20.5,474" fill="#d3d6e2"/><line x1="44.5" y1="476" x2="44.5" y2="492" stroke="#d3d6e2" stroke-width="1.1"/><polygon points="41.5,487 47.5,487 44.5,493" fill="#d3d6e2"/><path d="M70,477 q2,1.5 0,3 q-2,1.5 0,3 q2,1.5 0,3 q-2,1.5 0,3 q2,1.5 0,3" transform="translate(0 0)" fill="none" stroke="#d3d6e2" stroke-width="1.3"/><polygon points="67,480 73,480 70,474" fill="#d3d6e2"/><path d="M95,477 q2,1.5 0,3 q-2,1.5 0,3 q2,1.5 0,3 q-2,1.5 0,3 q2,1.5 0,3" transform="translate(0 -2)" fill="none" stroke="#d3d6e2" stroke-width="1.3"/><polygon points="92,487 98,487 95,493" fill="#d3d6e2"/><text x="120" y="488.5" font-family="Liberation Serif" font-size="11.5" font-weight="bold" font-style="italic" fill="#d3d6e2" text-anchor="middle" >rasg.</text><path d="M140.5,489 L140.5,478.5 L149.5,478.5 L149.5,489" fill="none" stroke="#d3d6e2" stroke-width="1.3"/><rect x="140" y="478" width="10" height="2.5" fill="#d3d6e2"/><polyline points="166,477 170,489.5 174,477" fill="none" stroke="#d3d6e2" stroke-width="1.2"/><ellipse cx="18.5" cy="513" rx="2.8" ry="2.1" transform="rotate(-25 18.5 513)" fill="#d3d6e2"/><line x1="20.7" y1="500" x2="20.7" y2="513" stroke="#d3d6e2" stroke-width="1.1"/><path d="M20.7,500.0 C21.7,503.0 25.2,504.0 24.7,508.0" fill="none" stroke="#d3d6e2" stroke-width="1.2"/><line x1="15" y1="508" x2="24" y2="503" stroke="#d3d6e2" stroke-width="0.9"/><ellipse cx="44" cy="513" rx="2.8" ry="2.1" transform="rotate(-25 44 513)" fill="#d3d6e2"/><line x1="46.199999999999996" y1="500" x2="46.199999999999996" y2="513" stroke="#d3d6e2" stroke-width="1.1"/><path d="M46.199999999999996,500.0 C47.199999999999996,503.0 50.699999999999996,504.0 50.199999999999996,508.0" fill="none" stroke="#d3d6e2" stroke-width="1.2"/><text x="70" y="511.5" font-family="Liberation Serif" font-size="11" font-weight="bold" font-style="italic" fill="#66707d" text-anchor="middle" >tr.</text><polygon points="89,508.5 101,506 101,509 89,511.5" fill="#d3d6e2"/><polygon points="101,520 107,520 107,514" fill="#d3d6e2"/><path d="M111,509.5 L115,505.5 L118,508.5 L121,505.5 L124,508.5 L127,505.5 L129,507.5" fill="none" stroke="#66707d" stroke-width="2"/><path d="M136,509.5 L140,505.5 L143,508.5 L146,505.5 L149,508.5 L152,505.5 L154,507.5" fill="none" stroke="#66707d" stroke-width="2"/><line x1="144.5" y1="503" x2="144.5" y2="512" stroke="#66707d" stroke-width="1"/><path d="M165,505 Q161.5,511.5 166.5,511.5 Q169,511.5 170.5,508 Q172.5,504 175,504 Q179.5,504 176.5,510" fill="none" stroke="#66707d" stroke-width="2.2"/><path d="M190,510 Q186.5,504 191.5,504 Q194,504 195.5,507.5 Q197.5,511.5 200,511.5 Q204.5,511.5 201.5,505" fill="none" stroke="#66707d" stroke-width="2.2"/><polyline points="25,528.5 16,533.5 25,538.5" fill="none" stroke="#d3d6e2" stroke-width="1.1"/><polyline points="40,528.5 49,533.5 40,538.5" fill="none" stroke="#d3d6e2" stroke-width="1.1"/><polygon points="60.5,533.5 70,529 79.5,533.5 70,538" fill="none" stroke="#d3d6e2" stroke-width="1.1"/><circle cx="94.5" cy="527" r="3.5" fill="none" stroke="#d3d6e2" stroke-width="1"/><polygon points="86,537 104,533 104,535 86,539" fill="#d3d6e2"/><rect x="86" y="539.5" width="18" height="2.5" fill="#d3d6e2"/><line x1="120" y1="523.5" x2="120" y2="531" stroke="#d3d6e2" stroke-width="1"/><line x1="116" y1="527" x2="124" y2="527" stroke="#d3d6e2" stroke-width="1"/><polygon points="111,537 129,535 129,537 111,539" fill="#d3d6e2"/><rect x="111" y="539.5" width="18" height="2.5" fill="#d3d6e2"/><line x1="145.00" y1="523.20" x2="145.00" y2="528.80" stroke="#d3d6e2" stroke-width="0.9"/><line x1="142.58" y1="524.60" x2="147.42" y2="527.40" stroke="#d3d6e2" stroke-width="0.9"/><line x1="142.58" y1="527.40" x2="147.42" y2="524.60" stroke="#d3d6e2" stroke-width="0.9"/><ellipse cx="144.5" cy="541" rx="3" ry="2.2" transform="rotate(-25 144.5 541)" fill="#d3d6e2"/><line x1="146.9" y1="531" x2="146.9" y2="541" stroke="#d3d6e2" stroke-width="1.1"/><ellipse cx="169" cy="532" rx="3" ry="2.2" transform="rotate(-25 169 532)" fill="#d3d6e2"/><line x1="171.4" y1="522" x2="171.4" y2="532" stroke="#d3d6e2" stroke-width="1.1"/><line x1="169.50" y1="537.20" x2="169.50" y2="542.80" stroke="#d3d6e2" stroke-width="0.9"/><line x1="167.08" y1="538.60" x2="171.92" y2="541.40" stroke="#d3d6e2" stroke-width="0.9"/><line x1="167.08" y1="541.40" x2="171.92" y2="538.60" stroke="#d3d6e2" stroke-width="0.9"/><rect x="8" y="551" width="199" height="1.3" fill="#5b7894"/><rect x="8" y="558" width="24" height="24" rx="4" fill="#4a8bd0"/><rect x="12.5" y="561" width="15" height="17.5" fill="#fff"/><line x1="15.5" y1="562.5" x2="15.5" y2="578.5" stroke="#4a8bd0" stroke-width="0.9"/><line x1="18.5" y1="562.5" x2="18.5" y2="578.5" stroke="#4a8bd0" stroke-width="0.9"/><line x1="21.5" y1="562.5" x2="21.5" y2="578.5" stroke="#4a8bd0" stroke-width="0.9"/><line x1="24.5" y1="562.5" x2="24.5" y2="578.5" stroke="#4a8bd0" stroke-width="0.9"/><line x1="12.5" y1="565" x2="27.5" y2="565" stroke="#4a8bd0" stroke-width="0.9"/><line x1="12.5" y1="568.5" x2="27.5" y2="568.5" stroke="#4a8bd0" stroke-width="0.9"/><line x1="12.5" y1="572" x2="27.5" y2="572" stroke="#4a8bd0" stroke-width="0.9"/><line x1="12.5" y1="575.5" x2="27.5" y2="575.5" stroke="#4a8bd0" stroke-width="0.9"/><path d="M47.5,561 L47.5,575 L42,579" fill="none" stroke="#d3d6e2" stroke-width="1.1"/><text x="70" y="575.5" font-family="Liberation Serif" font-size="12.5" font-weight="bold" font-style="normal" fill="#d3d6e2" text-anchor="middle" >BV</text><text x="95" y="575.5" font-family="Liberation Serif" font-size="12.5" font-weight="bold" font-style="normal" fill="#d3d6e2" text-anchor="middle" >2:51</text><text x="120" y="574" font-family="Liberation Serif" font-size="10" font-weight="bold" font-style="normal" fill="#d3d6e2" text-anchor="middle" >TXT</text><rect x="137.5" y="562.5" width="15" height="15" rx="2" fill="none" stroke="#d3d6e2" stroke-width="1"/><text x="145" y="574" font-family="Liberation Serif" font-size="10" font-weight="bold" font-style="normal" fill="#d3d6e2" text-anchor="middle" >A</text><path d="M166,570 L166,566 Q166,562 170,562 Q174,562 174,566 L174,570" fill="none" stroke="#d3d6e2" stroke-width="2"/><rect x="164" y="569" width="12" height="9" fill="#d3d6e2"/><path d="M194,562.5 L200.5,562.5 L200.5,564 L198.5,564 L198.5,578 L197,578 L197,564 L195.5,564 L195.5,578 L194,578 L194,570 Q189,570 189,566.2 Q189,562.5 194,562.5 Z" fill="#d3d6e2"/><ellipse cx="14.5" cy="596.5" rx="3" ry="2.2" transform="rotate(-25 14.5 596.5)" fill="#66707d"/><ellipse cx="24" cy="596.5" rx="3" ry="2.2" transform="rotate(-25 24 596.5)" fill="#66707d"/><line x1="17" y1="586" x2="17" y2="596.5" stroke="#66707d" stroke-width="1"/><line x1="26.5" y1="586" x2="26.5" y2="596.5" stroke="#66707d" stroke-width="1"/><rect x="17" y="585.5" width="9.5" height="1.8" rx="0" fill="#66707d"/><text x="20.5" y="605.5" font-family="Liberation Serif" font-size="6.8" font-weight="normal" font-style="normal" fill="#66707d" text-anchor="middle" >AUTO</text><ellipse cx="40.5" cy="601" rx="3" ry="2.2" transform="rotate(-25 40.5 601)" fill="#66707d"/><ellipse cx="50" cy="601" rx="3" ry="2.2" transform="rotate(-25 50 601)" fill="#66707d"/><line x1="43" y1="587.5" x2="43" y2="601" stroke="#66707d" stroke-width="1"/><line x1="52.5" y1="587.5" x2="52.5" y2="601" stroke="#66707d" stroke-width="1"/><rect x="43" y="587.0" width="9.5" height="1.8" rx="0" fill="#66707d"/><ellipse cx="64.5" cy="601" rx="3" ry="2.2" transform="rotate(-25 64.5 601)" fill="#66707d"/><ellipse cx="74" cy="601" rx="3" ry="2.2" transform="rotate(-25 74 601)" fill="#66707d"/><line x1="67" y1="587.5" x2="67" y2="601" stroke="#66707d" stroke-width="1"/><line x1="76.5" y1="587.5" x2="76.5" y2="601" stroke="#66707d" stroke-width="1"/><rect x="67" y="587" width="3" height="1.8" rx="0" fill="#66707d"/><rect x="73.5" y="587" width="3" height="1.8" rx="0" fill="#66707d"/><rect x="87" y="587" width="16" height="1.5" rx="0" fill="#66707d"/><rect x="87" y="589.5" width="16" height="1.2" rx="0" fill="#66707d"/><line x1="87.5" y1="587" x2="87.5" y2="603" stroke="#66707d" stroke-width="1"/><line x1="92.5" y1="587" x2="92.5" y2="603" stroke="#66707d" stroke-width="1"/><line x1="97.5" y1="587" x2="97.5" y2="603" stroke="#66707d" stroke-width="1"/><line x1="102.5" y1="587" x2="102.5" y2="603" stroke="#66707d" stroke-width="1"/><ellipse cx="114.5" cy="596" rx="3" ry="2.2" transform="rotate(-25 114.5 596)" fill="#d3d6e2"/><line x1="117" y1="586" x2="117" y2="596" stroke="#d3d6e2" stroke-width="1"/><ellipse cx="125" cy="586.5" rx="3" ry="2.2" transform="rotate(-25 125 586.5)" fill="#d3d6e2"/><line x1="122.5" y1="587" x2="122.5" y2="596" stroke="#d3d6e2" stroke-width="1"/><text x="120" y="605.5" font-family="Liberation Serif" font-size="6.8" font-weight="normal" font-style="normal" fill="#d3d6e2" text-anchor="middle" >AUTO</text><ellipse cx="140.5" cy="602" rx="3.2" ry="2.3" transform="rotate(-25 140.5 602)" fill="#d3d6e2"/><line x1="143.2" y1="589" x2="143.2" y2="602" stroke="#d3d6e2" stroke-width="1"/><ellipse cx="151" cy="587.5" rx="3.2" ry="2.3" transform="rotate(-25 151 587.5)" fill="#d3d6e2"/><line x1="148.3" y1="588" x2="148.3" y2="600" stroke="#d3d6e2" stroke-width="1"/><path d="M161.5,589 L161.5,586 L167,586 L167,589 M171.5,589 L171.5,586 L177,586 L177,589 M161.5,601 L161.5,598 L177,598 L177,601" fill="none" stroke="#66707d" stroke-width="0.9"/><polygon points="161.5,593 167,593 164.2,596.5" fill="#66707d"/><polygon points="171.5,593 177,593 174.2,596.5" fill="#66707d"/><rect x="8" y="613" width="199" height="1.3" fill="#5b7894"/><ellipse cx="17" cy="637.5" rx="3.6" ry="2.6" transform="rotate(-25 17 637.5)" fill="#d3d6e2"/><line x1="20.0" y1="623.5" x2="20.0" y2="637.5" stroke="#d3d6e2" stroke-width="1.1"/><rect x="22.5" y="632" width="6" height="1.9" rx="0" fill="#d3d6e2"/><rect x="22.5" y="635.8" width="6" height="1.9" rx="0" fill="#d3d6e2"/><rect x="37" y="636.5" width="3" height="5" rx="0" fill="#d3d6e2"/><rect x="42" y="633.5" width="3" height="8" rx="0" fill="#d3d6e2"/><rect x="47" y="631.0" width="3" height="10.5" rx="0" fill="#d3d6e2"/><text x="50" y="631" font-family="Liberation Sans" font-size="10" font-weight="bold" font-style="normal" fill="#d3d6e2" text-anchor="middle" >M</text><rect x="61.0" y="631.5" width="2.1" height="10" rx="0" fill="#d3d6e2"/><rect x="64.2" y="635.5" width="2.1" height="6" rx="0" fill="#d3d6e2"/><rect x="67.4" y="638.0" width="2.1" height="3.5" rx="0" fill="#d3d6e2"/><rect x="70.6" y="638.0" width="2.1" height="3.5" rx="0" fill="#d3d6e2"/><rect x="73.8" y="635.5" width="2.1" height="6" rx="0" fill="#d3d6e2"/><rect x="77.0" y="631.5" width="2.1" height="10" rx="0" fill="#d3d6e2"/><text x="75" y="631" font-family="Liberation Sans" font-size="10" font-weight="bold" font-style="normal" fill="#d3d6e2" text-anchor="middle" >M</text><rect x="86.0" y="635.5" width="3.2" height="6" rx="0" fill="#d3d6e2"/><rect x="90.8" y="632.0" width="3.2" height="9.5" rx="0" fill="#d3d6e2"/><rect x="95.6" y="628.5" width="3.2" height="13" rx="0" fill="#d3d6e2"/><rect x="100.4" y="625.5" width="3.2" height="16" rx="0" fill="#d3d6e2"/><rect x="111.0" y="625.5" width="2.1" height="16" rx="0" fill="#d3d6e2"/><rect x="114.3" y="630.5" width="2.1" height="11" rx="0" fill="#d3d6e2"/><rect x="117.6" y="634.5" width="2.1" height="7" rx="0" fill="#d3d6e2"/><rect x="120.9" y="636.5" width="2.1" height="5" rx="0" fill="#d3d6e2"/><rect x="124.2" y="632.5" width="2.1" height="9" rx="0" fill="#d3d6e2"/><rect x="127.5" y="627.5" width="2.1" height="14" rx="0" fill="#d3d6e2"/></svg><div class="a" style="left:216px;top:95px;width:1000px;height:764px;background:#565a61;"></div><div class="a" style="left:291px;top:95px;width:851px;height:764px;background:#f4f5f6;"></div><div class="a" style="left:291px;top:95px;width:851px;height:764px;overflow:hidden"><div class="a" style="left:-291px;top:-95px;width:1558px;height:943px"><svg style="left:0;top:0" width="1558" height="943" viewBox="0 0 1558 943"><text x="716.50" y="188.20" font-family="Liberation Serif" font-size="35.7" font-weight="normal" font-style="normal" fill="#222" text-anchor="middle" >FLAMENCO STYLE</text><text x="1101.60" y="208.80" font-family="Liberation Serif" font-size="14.3" font-weight="normal" font-style="normal" fill="#222" text-anchor="end" >Music by Andry Ravaloson</text><text x="351.90" y="228.00" font-family="Liberation Serif" font-size="11.3" font-weight="normal" font-style="normal" fill="#222" text-anchor="start" >Standard tuning</text><ellipse cx="394.3" cy="250" rx="2.6" ry="1.9" transform="rotate(-22 394.3 250)" fill="#1b1b1b"/><line x1="396.5" y1="237.5" x2="396.5" y2="249.5" stroke="#1b1b1b" stroke-width="0.9"/><text x="403.50" y="250.10" font-family="Liberation Serif" font-size="14.5" font-weight="bold" font-style="normal" fill="#222" text-anchor="start" >= 200</text><line x1="332" y1="353.30" x2="1102" y2="353.30" stroke="#a9aaab" stroke-width="1"/><line x1="332" y1="359.32" x2="1102" y2="359.32" stroke="#a9aaab" stroke-width="1"/><line x1="332" y1="365.34" x2="1102" y2="365.34" stroke="#a9aaab" stroke-width="1"/><line x1="332" y1="371.36" x2="1102" y2="371.36" stroke="#a9aaab" stroke-width="1"/><line x1="332" y1="377.38" x2="1102" y2="377.38" stroke="#a9aaab" stroke-width="1"/><line x1="332" y1="418.90" x2="1102" y2="418.90" stroke="#a9aaab" stroke-width="1"/><line x1="332" y1="428.02" x2="1102" y2="428.02" stroke="#a9aaab" stroke-width="1"/><line x1="332" y1="437.14" x2="1102" y2="437.14" stroke="#a9aaab" stroke-width="1"/><line x1="332" y1="446.26" x2="1102" y2="446.26" stroke="#a9aaab" stroke-width="1"/><line x1="332" y1="455.38" x2="1102" y2="455.38" stroke="#a9aaab" stroke-width="1"/><line x1="332" y1="464.50" x2="1102" y2="464.50" stroke="#a9aaab" stroke-width="1"/><line x1="331.5" y1="353.30" x2="331.5" y2="464.50" stroke="#222" stroke-width="1.0"/><path d="M341.40,383.80 C341.80,388.10 347.30,388.10 346.90,382.80 L344.80,361.20 C343.80,355.30 343.80,345.80 346.40,345.00" fill="none" stroke="#1b1b1b" stroke-width="1.25" stroke-linecap="round"/><path d="M346.40,345.00 C349.80,345.80 349.70,352.80 347.50,356.10 C344.00,360.80 336.40,364.80 336.40,370.50" fill="none" stroke="#1b1b1b" stroke-width="2.5" stroke-linecap="round"/><path d="M336.40,370.50 C336.40,375.30 340.50,377.10 343.80,377.10 C348.50,377.10 351.50,374.30 351.50,371.30 C351.50,367.50 348.50,366.00 345.90,366.00 C343.00,366.00 341.50,368.30 342.00,370.80 C342.40,372.60 342.90,373.60 343.20,373.90" fill="none" stroke="#1b1b1b" stroke-width="1.9" stroke-linecap="round"/><circle cx="341.40" cy="383.50" r="2.5" fill="#1b1b1b"/><path d="M364.10,353.30 L367.40,353.30 L367.40,364.10 L368.80,365.30 L362.40,365.30 L364.10,364.10 Z" fill="#1b1b1b"/><path d="M364.40,353.50 L365.40,355.50 L359.70,361.60 L358.00,361.60 Z" fill="#1b1b1b"/><rect x="357.80" y="361.20" width="11.3" height="1.7" fill="#1b1b1b"/><path d="M364.10,365.35 L367.40,365.35 L367.40,376.15 L368.80,377.35 L362.40,377.35 L364.10,376.15 Z" fill="#1b1b1b"/><path d="M364.40,365.55 L365.40,367.55 L359.70,373.65 L358.00,373.65 Z" fill="#1b1b1b"/><rect x="357.80" y="373.25" width="11.3" height="1.7" fill="#1b1b1b"/><text x="0" y="0" font-family="Liberation Serif" font-size="11" fill="#333" transform="translate(326 423.5) rotate(-90)">n.guit.</text><text x="343.70" y="434.40" font-family="Liberation Sans" font-size="14.8" font-weight="normal" font-style="normal" fill="#222" text-anchor="middle" >T</text><text x="343.70" y="446.80" font-family="Liberation Sans" font-size="14.8" font-weight="normal" font-style="normal" fill="#222" text-anchor="middle" >A</text><text x="343.70" y="459.20" font-family="Liberation Sans" font-size="14.8" font-weight="normal" font-style="normal" fill="#222" text-anchor="middle" >B</text><rect x="375.20" y="353.30" width="2.8" height="24.08" fill="#1b1b1b"/><line x1="380.59999999999997" y1="353.30" x2="380.59999999999997" y2="377.38" stroke="#3a3a3a" stroke-width="0.9"/><circle cx="383.50" cy="362.33" r="1.1" fill="#1b1b1b"/><circle cx="383.50" cy="368.35" r="1.1" fill="#1b1b1b"/><rect x="375.20" y="418.90" width="2.8" height="45.60" fill="#1b1b1b"/><line x1="380.59999999999997" y1="418.90" x2="380.59999999999997" y2="464.50" stroke="#3a3a3a" stroke-width="0.9"/><circle cx="383.50" cy="432.58" r="1.1" fill="#1b1b1b"/><circle cx="383.50" cy="450.82" r="1.1" fill="#1b1b1b"/><text x="377.00" y="350.50" font-family="Liberation Serif" font-size="8" font-weight="normal" font-style="normal" fill="#9a9a9a" text-anchor="middle" >1</text><line x1="388.50" y1="383.40" x2="399.50" y2="383.40" stroke="#a9aaab" stroke-width="1"/><line x1="388.50" y1="389.42" x2="399.50" y2="389.42" stroke="#a9aaab" stroke-width="1"/><ellipse cx="394.00" cy="356.31" rx="3.85" ry="2.85" transform="rotate(-22 394.00 356.31)" fill="#1b1b1b"/><ellipse cx="394.00" cy="362.33" rx="3.85" ry="2.85" transform="rotate(-22 394.00 362.33)" fill="#1b1b1b"/><ellipse cx="394.00" cy="368.35" rx="3.85" ry="2.85" transform="rotate(-22 394.00 368.35)" fill="#1b1b1b"/><ellipse cx="394.00" cy="377.38" rx="3.85" ry="2.85" transform="rotate(-22 394.00 377.38)" fill="#1b1b1b"/><ellipse cx="394.00" cy="389.42" rx="3.85" ry="2.85" transform="rotate(-22 394.00 389.42)" fill="#1b1b1b"/><line x1="397.50" y1="336.50" x2="397.50" y2="389.42" stroke="#1b1b1b" stroke-width="1.2"/><line x1="435.00" y1="383.40" x2="446.00" y2="383.40" stroke="#a9aaab" stroke-width="1"/><line x1="435.00" y1="389.42" x2="446.00" y2="389.42" stroke="#a9aaab" stroke-width="1"/><ellipse cx="440.50" cy="356.31" rx="3.85" ry="2.85" transform="rotate(-22 440.50 356.31)" fill="#1b1b1b"/><ellipse cx="440.50" cy="362.33" rx="3.85" ry="2.85" transform="rotate(-22 440.50 362.33)" fill="#1b1b1b"/><ellipse cx="440.50" cy="368.35" rx="3.85" ry="2.85" transform="rotate(-22 440.50 368.35)" fill="#1b1b1b"/><ellipse cx="440.50" cy="377.38" rx="3.85" ry="2.85" transform="rotate(-22 440.50 377.38)" fill="#1b1b1b"/><ellipse cx="440.50" cy="389.42" rx="3.85" ry="2.85" transform="rotate(-22 440.50 389.42)" fill="#1b1b1b"/><line x1="444.00" y1="336.50" x2="444.00" y2="389.42" stroke="#1b1b1b" stroke-width="1.2"/><line x1="481.80" y1="383.40" x2="492.80" y2="383.40" stroke="#a9aaab" stroke-width="1"/><line x1="481.80" y1="389.42" x2="492.80" y2="389.42" stroke="#a9aaab" stroke-width="1"/><ellipse cx="487.30" cy="356.31" rx="3.85" ry="2.85" transform="rotate(-22 487.30 356.31)" fill="#1b1b1b"/><ellipse cx="487.30" cy="362.33" rx="3.85" ry="2.85" transform="rotate(-22 487.30 362.33)" fill="#1b1b1b"/><ellipse cx="487.30" cy="368.35" rx="3.85" ry="2.85" transform="rotate(-22 487.30 368.35)" fill="#1b1b1b"/><ellipse cx="487.30" cy="377.38" rx="3.85" ry="2.85" transform="rotate(-22 487.30 377.38)" fill="#1b1b1b"/><ellipse cx="487.30" cy="389.42" rx="3.85" ry="2.85" transform="rotate(-22 487.30 389.42)" fill="#1b1b1b"/><line x1="490.80" y1="336.50" x2="490.80" y2="389.42" stroke="#1b1b1b" stroke-width="1.2"/><line x1="528.30" y1="383.40" x2="539.30" y2="383.40" stroke="#a9aaab" stroke-width="1"/><line x1="528.30" y1="389.42" x2="539.30" y2="389.42" stroke="#a9aaab" stroke-width="1"/><ellipse cx="533.80" cy="356.31" rx="3.85" ry="2.85" transform="rotate(-22 533.80 356.31)" fill="#1b1b1b"/><ellipse cx="533.80" cy="362.33" rx="3.85" ry="2.85" transform="rotate(-22 533.80 362.33)" fill="#1b1b1b"/><ellipse cx="533.80" cy="368.35" rx="3.85" ry="2.85" transform="rotate(-22 533.80 368.35)" fill="#1b1b1b"/><ellipse cx="533.80" cy="377.38" rx="3.85" ry="2.85" transform="rotate(-22 533.80 377.38)" fill="#1b1b1b"/><ellipse cx="533.80" cy="389.42" rx="3.85" ry="2.85" transform="rotate(-22 533.80 389.42)" fill="#1b1b1b"/><line x1="537.30" y1="336.50" x2="537.30" y2="389.42" stroke="#1b1b1b" stroke-width="1.2"/><line x1="575.20" y1="383.40" x2="586.20" y2="383.40" stroke="#a9aaab" stroke-width="1"/><line x1="575.20" y1="389.42" x2="586.20" y2="389.42" stroke="#a9aaab" stroke-width="1"/><ellipse cx="580.70" cy="356.31" rx="3.85" ry="2.85" transform="rotate(-22 580.70 356.31)" fill="#1b1b1b"/><ellipse cx="580.70" cy="362.33" rx="3.85" ry="2.85" transform="rotate(-22 580.70 362.33)" fill="#1b1b1b"/><ellipse cx="580.70" cy="368.35" rx="3.85" ry="2.85" transform="rotate(-22 580.70 368.35)" fill="#1b1b1b"/><ellipse cx="580.70" cy="377.38" rx="3.85" ry="2.85" transform="rotate(-22 580.70 377.38)" fill="#1b1b1b"/><ellipse cx="580.70" cy="389.42" rx="3.85" ry="2.85" transform="rotate(-22 580.70 389.42)" fill="#1b1b1b"/><line x1="584.20" y1="338.20" x2="584.20" y2="389.42" stroke="#1b1b1b" stroke-width="1.2"/><path d="M584.20,338.20 C585.20,344.20 591.70,347.20 589.20,357.20 C590.20,349.20 585.70,347.20 584.20,344.20 Z" fill="#1b1b1b"/><line x1="669.70" y1="383.40" x2="680.70" y2="383.40" stroke="#a9aaab" stroke-width="1"/><line x1="669.70" y1="389.42" x2="680.70" y2="389.42" stroke="#a9aaab" stroke-width="1"/><ellipse cx="675.20" cy="356.31" rx="3.85" ry="2.85" transform="rotate(-22 675.20 356.31)" fill="#1b1b1b"/><ellipse cx="675.20" cy="362.33" rx="3.85" ry="2.85" transform="rotate(-22 675.20 362.33)" fill="#1b1b1b"/><ellipse cx="675.20" cy="368.35" rx="3.85" ry="2.85" transform="rotate(-22 675.20 368.35)" fill="#1b1b1b"/><ellipse cx="675.20" cy="377.38" rx="3.85" ry="2.85" transform="rotate(-22 675.20 377.38)" fill="#1b1b1b"/><ellipse cx="675.20" cy="389.42" rx="3.85" ry="2.85" transform="rotate(-22 675.20 389.42)" fill="#1b1b1b"/><line x1="678.70" y1="341.40" x2="678.70" y2="389.42" stroke="#1b1b1b" stroke-width="1.2"/><polygon points="396.90,336.50 444.60,336.50 444.60,339.40 396.90,339.40" fill="#1b1b1b"/><polygon points="490.20,336.50 537.90,336.50 537.90,339.40 490.20,339.40" fill="#1b1b1b"/><path d="M446.00,354.11 C456.36,349.04 472.64,349.04 483.00,354.11 C472.64,350.04 456.36,350.04 446.00,354.11 Z" fill="#1b1b1b" stroke="#1b1b1b" stroke-width="0.5" stroke-linejoin="round"/><path d="M446.00,360.13 C456.36,355.06 472.64,355.06 483.00,360.13 C472.64,356.06 456.36,356.06 446.00,360.13 Z" fill="#1b1b1b" stroke="#1b1b1b" stroke-width="0.5" stroke-linejoin="round"/><path d="M446.00,370.55 C456.36,375.62 472.64,375.62 483.00,370.55 C472.64,374.62 456.36,374.62 446.00,370.55 Z" fill="#1b1b1b" stroke="#1b1b1b" stroke-width="0.5" stroke-linejoin="round"/><path d="M446.00,379.58 C456.36,384.65 472.64,384.65 483.00,379.58 C472.64,383.65 456.36,383.65 446.00,379.58 Z" fill="#1b1b1b" stroke="#1b1b1b" stroke-width="0.5" stroke-linejoin="round"/><path d="M446.00,391.62 C456.36,396.69 472.64,396.69 483.00,391.62 C472.64,395.69 456.36,395.69 446.00,391.62 Z" fill="#1b1b1b" stroke="#1b1b1b" stroke-width="0.5" stroke-linejoin="round"/><circle cx="626.90" cy="362.50" r="1.6" fill="#1b1b1b"/><path d="M626.00,363.30 Q628.50,364.30 631.10,361.50 L627.90,371.50" fill="none" stroke="#1b1b1b" stroke-width="1.2"/><line x1="487.30" y1="321.30" x2="487.30" y2="327.90" stroke="#1b1b1b" stroke-width="0.95"/><line x1="484.44" y1="322.95" x2="490.16" y2="326.25" stroke="#1b1b1b" stroke-width="0.95"/><line x1="484.44" y1="326.25" x2="490.16" y2="322.95" stroke="#1b1b1b" stroke-width="0.95"/><line x1="628.30" y1="321.30" x2="628.30" y2="327.90" stroke="#1b1b1b" stroke-width="0.95"/><line x1="625.44" y1="322.95" x2="631.16" y2="326.25" stroke="#1b1b1b" stroke-width="0.95"/><line x1="625.44" y1="326.25" x2="631.16" y2="322.95" stroke="#1b1b1b" stroke-width="0.95"/><text x="664.00" y="334.00" font-family="Liberation Serif" font-size="11" font-weight="normal" font-style="italic" fill="#333" text-anchor="start" >rasg.</text><rect x="390.90" y="414.90" width="6.20" height="8" fill="#f4f5f6"/><text x="394.00" y="422.20" font-family="Liberation Sans" font-size="9.2" font-weight="normal" font-style="normal" fill="#222" text-anchor="middle" >0</text><rect x="390.90" y="424.02" width="6.20" height="8" fill="#f4f5f6"/><text x="394.00" y="431.32" font-family="Liberation Sans" font-size="9.2" font-weight="normal" font-style="normal" fill="#222" text-anchor="middle" >1</text><rect x="390.90" y="433.14" width="6.20" height="8" fill="#f4f5f6"/><text x="394.00" y="440.44" font-family="Liberation Sans" font-size="9.2" font-weight="normal" font-style="normal" fill="#222" text-anchor="middle" >2</text><rect x="390.90" y="442.26" width="6.20" height="8" fill="#f4f5f6"/><text x="394.00" y="449.56" font-family="Liberation Sans" font-size="9.2" font-weight="normal" font-style="normal" fill="#222" text-anchor="middle" >2</text><rect x="390.90" y="451.38" width="6.20" height="8" fill="#f4f5f6"/><text x="394.00" y="458.68" font-family="Liberation Sans" font-size="9.2" font-weight="normal" font-style="normal" fill="#222" text-anchor="middle" >0</text><rect x="437.40" y="414.90" width="6.20" height="8" fill="#f4f5f6"/><text x="440.50" y="422.20" font-family="Liberation Sans" font-size="9.2" font-weight="normal" font-style="normal" fill="#222" text-anchor="middle" >0</text><rect x="437.40" y="424.02" width="6.20" height="8" fill="#f4f5f6"/><text x="440.50" y="431.32" font-family="Liberation Sans" font-size="9.2" font-weight="normal" font-style="normal" fill="#222" text-anchor="middle" >1</text><rect x="437.40" y="433.14" width="6.20" height="8" fill="#f4f5f6"/><text x="440.50" y="440.44" font-family="Liberation Sans" font-size="9.2" font-weight="normal" font-style="normal" fill="#222" text-anchor="middle" >2</text><rect x="437.40" y="442.26" width="6.20" height="8" fill="#f4f5f6"/><text x="440.50" y="449.56" font-family="Liberation Sans" font-size="9.2" font-weight="normal" font-style="normal" fill="#222" text-anchor="middle" >2</text><rect x="437.40" y="451.38" width="6.20" height="8" fill="#f4f5f6"/><text x="440.50" y="458.68" font-family="Liberation Sans" font-size="9.2" font-weight="normal" font-style="normal" fill="#222" text-anchor="middle" >0</text><rect x="530.70" y="414.90" width="6.20" height="8" fill="#f4f5f6"/><text x="533.80" y="422.20" font-family="Liberation Sans" font-size="9.2" font-weight="normal" font-style="normal" fill="#222" text-anchor="middle" >0</text><rect x="530.70" y="424.02" width="6.20" height="8" fill="#f4f5f6"/><text x="533.80" y="431.32" font-family="Liberation Sans" font-size="9.2" font-weight="normal" font-style="normal" fill="#222" text-anchor="middle" >1</text><rect x="530.70" y="433.14" width="6.20" height="8" fill="#f4f5f6"/><text x="533.80" y="440.44" font-family="Liberation Sans" font-size="9.2" font-weight="normal" font-style="normal" fill="#222" text-anchor="middle" >2</text><rect x="530.70" y="442.26" width="6.20" height="8" fill="#f4f5f6"/><text x="533.80" y="449.56" font-family="Liberation Sans" font-size="9.2" font-weight="normal" font-style="normal" fill="#222" text-anchor="middle" >2</text><rect x="530.70" y="451.38" width="6.20" height="8" fill="#f4f5f6"/><text x="533.80" y="458.68" font-family="Liberation Sans" font-size="9.2" font-weight="normal" font-style="normal" fill="#222" text-anchor="middle" >0</text><rect x="577.60" y="414.90" width="6.20" height="8" fill="#f4f5f6"/><text x="580.70" y="422.20" font-family="Liberation Sans" font-size="9.2" font-weight="normal" font-style="normal" fill="#222" text-anchor="middle" >0</text><rect x="577.60" y="424.02" width="6.20" height="8" fill="#f4f5f6"/><text x="580.70" y="431.32" font-family="Liberation Sans" font-size="9.2" font-weight="normal" font-style="normal" fill="#222" text-anchor="middle" >1</text><rect x="577.60" y="433.14" width="6.20" height="8" fill="#f4f5f6"/><text x="580.70" y="440.44" font-family="Liberation Sans" font-size="9.2" font-weight="normal" font-style="normal" fill="#222" text-anchor="middle" >2</text><rect x="577.60" y="442.26" width="6.20" height="8" fill="#f4f5f6"/><text x="580.70" y="449.56" font-family="Liberation Sans" font-size="9.2" font-weight="normal" font-style="normal" fill="#222" text-anchor="middle" >2</text><rect x="577.60" y="451.38" width="6.20" height="8" fill="#f4f5f6"/><text x="580.70" y="458.68" font-family="Liberation Sans" font-size="9.2" font-weight="normal" font-style="normal" fill="#222" text-anchor="middle" >0</text><rect x="672.10" y="414.90" width="6.20" height="8" fill="#f4f5f6"/><text x="675.20" y="422.20" font-family="Liberation Sans" font-size="9.2" font-weight="normal" font-style="normal" fill="#222" text-anchor="middle" >0</text><rect x="672.10" y="424.02" width="6.20" height="8" fill="#f4f5f6"/><text x="675.20" y="431.32" font-family="Liberation Sans" font-size="9.2" font-weight="normal" font-style="normal" fill="#222" text-anchor="middle" >1</text><rect x="672.10" y="433.14" width="6.20" height="8" fill="#f4f5f6"/><text x="675.20" y="440.44" font-family="Liberation Sans" font-size="9.2" font-weight="normal" font-style="normal" fill="#222" text-anchor="middle" >2</text><rect x="672.10" y="442.26" width="6.20" height="8" fill="#f4f5f6"/><text x="675.20" y="449.56" font-family="Liberation Sans" font-size="9.2" font-weight="normal" font-style="normal" fill="#222" text-anchor="middle" >2</text><rect x="672.10" y="451.38" width="6.20" height="8" fill="#f4f5f6"/><text x="675.20" y="458.68" font-family="Liberation Sans" font-size="9.2" font-weight="normal" font-style="normal" fill="#222" text-anchor="middle" >0</text><rect x="387.5" y="412.5" width="13.5" height="13" rx="2" fill="#fbe2b2" stroke="#8b6d3d" stroke-width="0.9"/><text x="394.20" y="422.30" font-family="Liberation Sans" font-size="9.2" font-weight="normal" font-style="normal" fill="#8b6d3d" text-anchor="middle" >0</text><rect x="390.90" y="424.02" width="6.20" height="8" fill="#f4f5f6"/><text x="394.00" y="431.32" font-family="Liberation Sans" font-size="9.2" font-weight="normal" font-style="normal" fill="#222" text-anchor="middle" >1</text><rect x="390.90" y="433.14" width="6.20" height="8" fill="#f4f5f6"/><text x="394.00" y="440.44" font-family="Liberation Sans" font-size="9.2" font-weight="normal" font-style="normal" fill="#222" text-anchor="middle" >2</text><rect x="390.90" y="442.26" width="6.20" height="8" fill="#f4f5f6"/><text x="394.00" y="449.56" font-family="Liberation Sans" font-size="9.2" font-weight="normal" font-style="normal" fill="#222" text-anchor="middle" >2</text><rect x="390.90" y="451.38" width="6.20" height="8" fill="#f4f5f6"/><text x="394.00" y="458.68" font-family="Liberation Sans" font-size="9.2" font-weight="normal" font-style="normal" fill="#222" text-anchor="middle" >0</text><line x1="744.2" y1="353.30" x2="744.2" y2="377.38" stroke="#3a3a3a" stroke-width="1.1"/><line x1="744.2" y1="418.90" x2="744.2" y2="464.50" stroke="#3a3a3a" stroke-width="1.1"/><text x="743.50" y="350.50" font-family="Liberation Serif" font-size="8" font-weight="normal" font-style="normal" fill="#9a9a9a" text-anchor="middle" >2</text><line x1="754.30" y1="383.40" x2="765.30" y2="383.40" stroke="#a9aaab" stroke-width="1"/><line x1="754.30" y1="389.42" x2="765.30" y2="389.42" stroke="#a9aaab" stroke-width="1"/><ellipse cx="759.80" cy="353.30" rx="3.85" ry="2.85" transform="rotate(-22 759.80 353.30)" fill="#1b1b1b"/><ellipse cx="759.80" cy="365.34" rx="3.85" ry="2.85" transform="rotate(-22 759.80 365.34)" fill="#1b1b1b"/><ellipse cx="759.80" cy="371.36" rx="3.85" ry="2.85" transform="rotate(-22 759.80 371.36)" fill="#1b1b1b"/><ellipse cx="759.80" cy="380.39" rx="3.85" ry="2.85" transform="rotate(-22 759.80 380.39)" fill="#1b1b1b"/><ellipse cx="759.80" cy="386.41" rx="3.85" ry="2.85" transform="rotate(-22 759.80 386.41)" fill="#1b1b1b"/><ellipse cx="759.80" cy="392.43" rx="3.85" ry="2.85" transform="rotate(-22 759.80 392.43)" fill="#1b1b1b"/><line x1="763.30" y1="333.40" x2="763.30" y2="392.43" stroke="#1b1b1b" stroke-width="1.2"/><line x1="796.70" y1="383.40" x2="807.70" y2="383.40" stroke="#a9aaab" stroke-width="1"/><line x1="796.70" y1="389.42" x2="807.70" y2="389.42" stroke="#a9aaab" stroke-width="1"/><ellipse cx="802.20" cy="353.30" rx="3.85" ry="2.85" transform="rotate(-22 802.20 353.30)" fill="#1b1b1b"/><ellipse cx="802.20" cy="365.34" rx="3.85" ry="2.85" transform="rotate(-22 802.20 365.34)" fill="#1b1b1b"/><ellipse cx="802.20" cy="371.36" rx="3.85" ry="2.85" transform="rotate(-22 802.20 371.36)" fill="#1b1b1b"/><ellipse cx="802.20" cy="380.39" rx="3.85" ry="2.85" transform="rotate(-22 802.20 380.39)" fill="#1b1b1b"/><ellipse cx="802.20" cy="386.41" rx="3.85" ry="2.85" transform="rotate(-22 802.20 386.41)" fill="#1b1b1b"/><ellipse cx="802.20" cy="392.43" rx="3.85" ry="2.85" transform="rotate(-22 802.20 392.43)" fill="#1b1b1b"/><line x1="805.70" y1="333.40" x2="805.70" y2="392.43" stroke="#1b1b1b" stroke-width="1.2"/><line x1="838.70" y1="383.40" x2="849.70" y2="383.40" stroke="#a9aaab" stroke-width="1"/><line x1="838.70" y1="389.42" x2="849.70" y2="389.42" stroke="#a9aaab" stroke-width="1"/><ellipse cx="844.20" cy="353.30" rx="3.85" ry="2.85" transform="rotate(-22 844.20 353.30)" fill="#1b1b1b"/><ellipse cx="844.20" cy="365.34" rx="3.85" ry="2.85" transform="rotate(-22 844.20 365.34)" fill="#1b1b1b"/><ellipse cx="844.20" cy="371.36" rx="3.85" ry="2.85" transform="rotate(-22 844.20 371.36)" fill="#1b1b1b"/><ellipse cx="844.20" cy="380.39" rx="3.85" ry="2.85" transform="rotate(-22 844.20 380.39)" fill="#1b1b1b"/><ellipse cx="844.20" cy="386.41" rx="3.85" ry="2.85" transform="rotate(-22 844.20 386.41)" fill="#1b1b1b"/><ellipse cx="844.20" cy="392.43" rx="3.85" ry="2.85" transform="rotate(-22 844.20 392.43)" fill="#1b1b1b"/><line x1="847.70" y1="333.40" x2="847.70" y2="392.43" stroke="#1b1b1b" stroke-width="1.2"/><line x1="881.50" y1="383.40" x2="892.50" y2="383.40" stroke="#a9aaab" stroke-width="1"/><line x1="881.50" y1="389.42" x2="892.50" y2="389.42" stroke="#a9aaab" stroke-width="1"/><ellipse cx="887.00" cy="353.30" rx="3.85" ry="2.85" transform="rotate(-22 887.00 353.30)" fill="#1b1b1b"/><ellipse cx="887.00" cy="365.34" rx="3.85" ry="2.85" transform="rotate(-22 887.00 365.34)" fill="#1b1b1b"/><ellipse cx="887.00" cy="371.36" rx="3.85" ry="2.85" transform="rotate(-22 887.00 371.36)" fill="#1b1b1b"/><ellipse cx="887.00" cy="380.39" rx="3.85" ry="2.85" transform="rotate(-22 887.00 380.39)" fill="#1b1b1b"/><ellipse cx="887.00" cy="386.41" rx="3.85" ry="2.85" transform="rotate(-22 887.00 386.41)" fill="#1b1b1b"/><ellipse cx="887.00" cy="392.43" rx="3.85" ry="2.85" transform="rotate(-22 887.00 392.43)" fill="#1b1b1b"/><line x1="890.50" y1="333.40" x2="890.50" y2="392.43" stroke="#1b1b1b" stroke-width="1.2"/><polygon points="762.70,333.40 806.30,333.40 806.30,336.30 762.70,336.30" fill="#1b1b1b"/><polygon points="847.10,333.40 891.10,333.40 891.10,336.30 847.10,336.30" fill="#1b1b1b"/><path d="M807.00,351.10 C816.24,346.03 830.76,346.03 840.00,351.10 C830.76,347.03 816.24,347.03 807.00,351.10 Z" fill="#1b1b1b" stroke="#1b1b1b" stroke-width="0.5" stroke-linejoin="round"/><path d="M807.00,363.14 C816.24,358.07 830.76,358.07 840.00,363.14 C830.76,359.07 816.24,359.07 807.00,363.14 Z" fill="#1b1b1b" stroke="#1b1b1b" stroke-width="0.5" stroke-linejoin="round"/><path d="M807.00,369.16 C816.24,364.09 830.76,364.09 840.00,369.16 C830.76,365.09 816.24,365.09 807.00,369.16 Z" fill="#1b1b1b" stroke="#1b1b1b" stroke-width="0.5" stroke-linejoin="round"/><path d="M807.00,382.59 C816.24,387.66 830.76,387.66 840.00,382.59 C830.76,386.66 816.24,386.66 807.00,382.59 Z" fill="#1b1b1b" stroke="#1b1b1b" stroke-width="0.5" stroke-linejoin="round"/><path d="M807.00,388.61 C816.24,393.68 830.76,393.68 840.00,388.61 C830.76,392.68 816.24,392.68 807.00,388.61 Z" fill="#1b1b1b" stroke="#1b1b1b" stroke-width="0.5" stroke-linejoin="round"/><path d="M807.00,394.63 C816.24,399.70 830.76,399.70 840.00,394.63 C830.76,398.70 816.24,398.70 807.00,394.63 Z" fill="#1b1b1b" stroke="#1b1b1b" stroke-width="0.5" stroke-linejoin="round"/><line x1="923.50" y1="383.40" x2="934.50" y2="383.40" stroke="#a9aaab" stroke-width="1"/><line x1="923.50" y1="389.42" x2="934.50" y2="389.42" stroke="#a9aaab" stroke-width="1"/><path d="M926.00,350.70 L932.00,355.90 M926.00,355.90 L932.00,350.70" stroke="#1b1b1b" stroke-width="0.9"/><path d="M926.00,362.74 L932.00,367.94 M926.00,367.94 L932.00,362.74" stroke="#1b1b1b" stroke-width="0.9"/><path d="M926.00,368.76 L932.00,373.96 M926.00,373.96 L932.00,368.76" stroke="#1b1b1b" stroke-width="0.9"/><path d="M926.00,377.79 L932.00,382.99 M926.00,382.99 L932.00,377.79" stroke="#1b1b1b" stroke-width="0.9"/><path d="M926.00,383.81 L932.00,389.01 M926.00,389.01 L932.00,383.81" stroke="#1b1b1b" stroke-width="0.9"/><path d="M926.00,389.83 L932.00,395.03 M926.00,395.03 L932.00,389.83" stroke="#1b1b1b" stroke-width="0.9"/><line x1="932.4" y1="336" x2="932.4" y2="392.43" stroke="#1b1b1b" stroke-width="1.1"/><path d="M932.4,336 C933.4,342 939.9,345 937.4,355 C938.4,347 933.9,345 932.4,342 Z" fill="#1b1b1b"/><path d="M925.50,399.20 L932.50,402.00 L925.50,404.80" fill="none" stroke="#1b1b1b" stroke-width="1.1" stroke-linejoin="miter"/><line x1="844.20" y1="321.30" x2="844.20" y2="327.90" stroke="#1b1b1b" stroke-width="0.95"/><line x1="841.34" y1="322.95" x2="847.06" y2="326.25" stroke="#1b1b1b" stroke-width="0.95"/><line x1="841.34" y1="326.25" x2="847.06" y2="322.95" stroke="#1b1b1b" stroke-width="0.95"/><line x1="929.00" y1="321.30" x2="929.00" y2="327.90" stroke="#1b1b1b" stroke-width="0.95"/><line x1="926.14" y1="322.95" x2="931.86" y2="326.25" stroke="#1b1b1b" stroke-width="0.95"/><line x1="926.14" y1="326.25" x2="931.86" y2="322.95" stroke="#1b1b1b" stroke-width="0.95"/><circle cx="970.70" cy="362.50" r="1.6" fill="#1b1b1b"/><path d="M969.80,363.30 Q972.30,364.30 974.90,361.50 L971.70,371.50" fill="none" stroke="#1b1b1b" stroke-width="1.2"/><line x1="972.30" y1="401.40" x2="972.30" y2="408.00" stroke="#1b1b1b" stroke-width="0.95"/><line x1="969.44" y1="403.05" x2="975.16" y2="406.35" stroke="#1b1b1b" stroke-width="0.95"/><line x1="969.44" y1="406.35" x2="975.16" y2="403.05" stroke="#1b1b1b" stroke-width="0.95"/><line x1="1008.30" y1="383.40" x2="1019.30" y2="383.40" stroke="#a9aaab" stroke-width="1"/><line x1="1008.30" y1="389.42" x2="1019.30" y2="389.42" stroke="#a9aaab" stroke-width="1"/><ellipse cx="1013.80" cy="353.30" rx="3.85" ry="2.85" transform="rotate(-22 1013.80 353.30)" fill="#1b1b1b"/><ellipse cx="1013.80" cy="365.34" rx="3.85" ry="2.85" transform="rotate(-22 1013.80 365.34)" fill="#1b1b1b"/><ellipse cx="1013.80" cy="371.36" rx="3.85" ry="2.85" transform="rotate(-22 1013.80 371.36)" fill="#1b1b1b"/><ellipse cx="1013.80" cy="380.39" rx="3.85" ry="2.85" transform="rotate(-22 1013.80 380.39)" fill="#1b1b1b"/><ellipse cx="1013.80" cy="386.41" rx="3.85" ry="2.85" transform="rotate(-22 1013.80 386.41)" fill="#1b1b1b"/><ellipse cx="1013.80" cy="392.43" rx="3.85" ry="2.85" transform="rotate(-22 1013.80 392.43)" fill="#1b1b1b"/><line x1="1017.30" y1="333.40" x2="1017.30" y2="392.43" stroke="#1b1b1b" stroke-width="1.2"/><line x1="1050.70" y1="383.40" x2="1061.70" y2="383.40" stroke="#a9aaab" stroke-width="1"/><line x1="1050.70" y1="389.42" x2="1061.70" y2="389.42" stroke="#a9aaab" stroke-width="1"/><ellipse cx="1056.20" cy="353.30" rx="3.85" ry="2.85" transform="rotate(-22 1056.20 353.30)" fill="#1b1b1b"/><ellipse cx="1056.20" cy="365.34" rx="3.85" ry="2.85" transform="rotate(-22 1056.20 365.34)" fill="#1b1b1b"/><ellipse cx="1056.20" cy="371.36" rx="3.85" ry="2.85" transform="rotate(-22 1056.20 371.36)" fill="#1b1b1b"/><ellipse cx="1056.20" cy="380.39" rx="3.85" ry="2.85" transform="rotate(-22 1056.20 380.39)" fill="#1b1b1b"/><ellipse cx="1056.20" cy="386.41" rx="3.85" ry="2.85" transform="rotate(-22 1056.20 386.41)" fill="#1b1b1b"/><ellipse cx="1056.20" cy="392.43" rx="3.85" ry="2.85" transform="rotate(-22 1056.20 392.43)" fill="#1b1b1b"/><line x1="1059.70" y1="333.40" x2="1059.70" y2="392.43" stroke="#1b1b1b" stroke-width="1.2"/><polygon points="1016.70,333.40 1060.30,333.40 1060.30,336.30 1016.70,336.30" fill="#1b1b1b"/><line x1="1056.20" y1="401.40" x2="1056.20" y2="408.00" stroke="#1b1b1b" stroke-width="0.95"/><line x1="1053.34" y1="403.05" x2="1059.06" y2="406.35" stroke="#1b1b1b" stroke-width="0.95"/><line x1="1053.34" y1="406.35" x2="1059.06" y2="403.05" stroke="#1b1b1b" stroke-width="0.95"/><text x="1003.30" y="326.20" font-family="Liberation Serif" font-size="11" font-weight="normal" font-style="italic" fill="#333" text-anchor="start" >rasg.</text><line x1="1027.30" y1="324.70" x2="1059.50" y2="324.70" stroke="#333" stroke-width="0.9" stroke-dasharray="2.8,2.6"/><line x1="1059.50" y1="322.20" x2="1059.50" y2="327.20" stroke="#333" stroke-width="0.9"/><rect x="756.70" y="414.90" width="6.20" height="8" fill="#f4f5f6"/><text x="759.80" y="422.20" font-family="Liberation Sans" font-size="9.2" font-weight="normal" font-style="normal" fill="#222" text-anchor="middle" >1</text><rect x="756.70" y="424.02" width="6.20" height="8" fill="#f4f5f6"/><text x="759.80" y="431.32" font-family="Liberation Sans" font-size="9.2" font-weight="normal" font-style="normal" fill="#222" text-anchor="middle" >0</text><rect x="756.70" y="433.14" width="6.20" height="8" fill="#f4f5f6"/><text x="759.80" y="440.44" font-family="Liberation Sans" font-size="9.2" font-weight="normal" font-style="normal" fill="#222" text-anchor="middle" >0</text><rect x="756.70" y="442.26" width="6.20" height="8" fill="#f4f5f6"/><text x="759.80" y="449.56" font-family="Liberation Sans" font-size="9.2" font-weight="normal" font-style="normal" fill="#222" text-anchor="middle" >0</text><rect x="756.70" y="451.38" width="6.20" height="8" fill="#f4f5f6"/><text x="759.80" y="458.68" font-family="Liberation Sans" font-size="9.2" font-weight="normal" font-style="normal" fill="#222" text-anchor="middle" >2</text><rect x="756.70" y="460.50" width="6.20" height="8" fill="#f4f5f6"/><text x="759.80" y="467.80" font-family="Liberation Sans" font-size="9.2" font-weight="normal" font-style="normal" fill="#222" text-anchor="middle" >3</text><rect x="799.10" y="414.90" width="6.20" height="8" fill="#f4f5f6"/><text x="802.20" y="422.20" font-family="Liberation Sans" font-size="9.2" font-weight="normal" font-style="normal" fill="#222" text-anchor="middle" >1</text><rect x="799.10" y="424.02" width="6.20" height="8" fill="#f4f5f6"/><text x="802.20" y="431.32" font-family="Liberation Sans" font-size="9.2" font-weight="normal" font-style="normal" fill="#222" text-anchor="middle" >0</text><rect x="799.10" y="433.14" width="6.20" height="8" fill="#f4f5f6"/><text x="802.20" y="440.44" font-family="Liberation Sans" font-size="9.2" font-weight="normal" font-style="normal" fill="#222" text-anchor="middle" >0</text><rect x="799.10" y="442.26" width="6.20" height="8" fill="#f4f5f6"/><text x="802.20" y="449.56" font-family="Liberation Sans" font-size="9.2" font-weight="normal" font-style="normal" fill="#222" text-anchor="middle" >0</text><rect x="799.10" y="451.38" width="6.20" height="8" fill="#f4f5f6"/><text x="802.20" y="458.68" font-family="Liberation Sans" font-size="9.2" font-weight="normal" font-style="normal" fill="#222" text-anchor="middle" >2</text><rect x="799.10" y="460.50" width="6.20" height="8" fill="#f4f5f6"/><text x="802.20" y="467.80" font-family="Liberation Sans" font-size="9.2" font-weight="normal" font-style="normal" fill="#222" text-anchor="middle" >3</text><rect x="883.90" y="414.90" width="6.20" height="8" fill="#f4f5f6"/><text x="887.00" y="422.20" font-family="Liberation Sans" font-size="9.2" font-weight="normal" font-style="normal" fill="#222" text-anchor="middle" >1</text><rect x="883.90" y="424.02" width="6.20" height="8" fill="#f4f5f6"/><text x="887.00" y="431.32" font-family="Liberation Sans" font-size="9.2" font-weight="normal" font-style="normal" fill="#222" text-anchor="middle" >0</text><rect x="883.90" y="433.14" width="6.20" height="8" fill="#f4f5f6"/><text x="887.00" y="440.44" font-family="Liberation Sans" font-size="9.2" font-weight="normal" font-style="normal" fill="#222" text-anchor="middle" >0</text><rect x="883.90" y="442.26" width="6.20" height="8" fill="#f4f5f6"/><text x="887.00" y="449.56" font-family="Liberation Sans" font-size="9.2" font-weight="normal" font-style="normal" fill="#222" text-anchor="middle" >0</text><rect x="883.90" y="451.38" width="6.20" height="8" fill="#f4f5f6"/><text x="887.00" y="458.68" font-family="Liberation Sans" font-size="9.2" font-weight="normal" font-style="normal" fill="#222" text-anchor="middle" >2</text><rect x="883.90" y="460.50" width="6.20" height="8" fill="#f4f5f6"/><text x="887.00" y="467.80" font-family="Liberation Sans" font-size="9.2" font-weight="normal" font-style="normal" fill="#222" text-anchor="middle" >3</text><rect x="1010.70" y="414.90" width="6.20" height="8" fill="#f4f5f6"/><text x="1013.80" y="422.20" font-family="Liberation Sans" font-size="9.2" font-weight="normal" font-style="normal" fill="#222" text-anchor="middle" >1</text><rect x="1010.70" y="424.02" width="6.20" height="8" fill="#f4f5f6"/><text x="1013.80" y="431.32" font-family="Liberation Sans" font-size="9.2" font-weight="normal" font-style="normal" fill="#222" text-anchor="middle" >0</text><rect x="1010.70" y="433.14" width="6.20" height="8" fill="#f4f5f6"/><text x="1013.80" y="440.44" font-family="Liberation Sans" font-size="9.2" font-weight="normal" font-style="normal" fill="#222" text-anchor="middle" >0</text><rect x="1010.70" y="442.26" width="6.20" height="8" fill="#f4f5f6"/><text x="1013.80" y="449.56" font-family="Liberation Sans" font-size="9.2" font-weight="normal" font-style="normal" fill="#222" text-anchor="middle" >0</text><rect x="1010.70" y="451.38" width="6.20" height="8" fill="#f4f5f6"/><text x="1013.80" y="458.68" font-family="Liberation Sans" font-size="9.2" font-weight="normal" font-style="normal" fill="#222" text-anchor="middle" >2</text><rect x="1010.70" y="460.50" width="6.20" height="8" fill="#f4f5f6"/><text x="1013.80" y="467.80" font-family="Liberation Sans" font-size="9.2" font-weight="normal" font-style="normal" fill="#222" text-anchor="middle" >3</text><rect x="1053.10" y="414.90" width="6.20" height="8" fill="#f4f5f6"/><text x="1056.20" y="422.20" font-family="Liberation Sans" font-size="9.2" font-weight="normal" font-style="normal" fill="#222" text-anchor="middle" >1</text><rect x="1053.10" y="424.02" width="6.20" height="8" fill="#f4f5f6"/><text x="1056.20" y="431.32" font-family="Liberation Sans" font-size="9.2" font-weight="normal" font-style="normal" fill="#222" text-anchor="middle" >0</text><rect x="1053.10" y="433.14" width="6.20" height="8" fill="#f4f5f6"/><text x="1056.20" y="440.44" font-family="Liberation Sans" font-size="9.2" font-weight="normal" font-style="normal" fill="#222" text-anchor="middle" >0</text><rect x="1053.10" y="442.26" width="6.20" height="8" fill="#f4f5f6"/><text x="1056.20" y="449.56" font-family="Liberation Sans" font-size="9.2" font-weight="normal" font-style="normal" fill="#222" text-anchor="middle" >0</text><rect x="1053.10" y="451.38" width="6.20" height="8" fill="#f4f5f6"/><text x="1056.20" y="458.68" font-family="Liberation Sans" font-size="9.2" font-weight="normal" font-style="normal" fill="#222" text-anchor="middle" >2</text><rect x="1053.10" y="460.50" width="6.20" height="8" fill="#f4f5f6"/><text x="1056.20" y="467.80" font-family="Liberation Sans" font-size="9.2" font-weight="normal" font-style="normal" fill="#222" text-anchor="middle" >3</text><rect x="925.90" y="414.90" width="6.20" height="8" fill="#f4f5f6"/><text x="929.00" y="422.20" font-family="Liberation Sans" font-size="9.2" font-weight="normal" font-style="normal" fill="#222" text-anchor="middle" >X</text><rect x="925.90" y="424.02" width="6.20" height="8" fill="#f4f5f6"/><text x="929.00" y="431.32" font-family="Liberation Sans" font-size="9.2" font-weight="normal" font-style="normal" fill="#222" text-anchor="middle" >X</text><rect x="925.90" y="433.14" width="6.20" height="8" fill="#f4f5f6"/><text x="929.00" y="440.44" font-family="Liberation Sans" font-size="9.2" font-weight="normal" font-style="normal" fill="#222" text-anchor="middle" >X</text><rect x="925.90" y="442.26" width="6.20" height="8" fill="#f4f5f6"/><text x="929.00" y="449.56" font-family="Liberation Sans" font-size="9.2" font-weight="normal" font-style="normal" fill="#222" text-anchor="middle" >X</text><rect x="925.90" y="451.38" width="6.20" height="8" fill="#f4f5f6"/><text x="929.00" y="458.68" font-family="Liberation Sans" font-size="9.2" font-weight="normal" font-style="normal" fill="#222" text-anchor="middle" >X</text><rect x="925.90" y="460.50" width="6.20" height="8" fill="#f4f5f6"/><text x="929.00" y="467.80" font-family="Liberation Sans" font-size="9.2" font-weight="normal" font-style="normal" fill="#222" text-anchor="middle" >X</text><line x1="1101.8" y1="353.30" x2="1101.8" y2="377.38" stroke="#3a3a3a" stroke-width="1.1"/><line x1="1101.8" y1="418.90" x2="1101.8" y2="464.50" stroke="#3a3a3a" stroke-width="1.1"/><line x1="378.40" y1="287.40" x2="378.40" y2="327.40" stroke="#333" stroke-width="0.9"/><line x1="384.68" y1="287.40" x2="384.68" y2="327.40" stroke="#333" stroke-width="0.9"/><line x1="390.96" y1="287.40" x2="390.96" y2="327.40" stroke="#333" stroke-width="0.9"/><line x1="397.24" y1="287.40" x2="397.24" y2="327.40" stroke="#333" stroke-width="0.9"/><line x1="403.52" y1="287.40" x2="403.52" y2="327.40" stroke="#333" stroke-width="0.9"/><line x1="409.80" y1="287.40" x2="409.80" y2="327.40" stroke="#333" stroke-width="0.9"/><line x1="378.40" y1="287.40" x2="409.80" y2="287.40" stroke="#333" stroke-width="0.9"/><line x1="378.40" y1="295.40" x2="409.80" y2="295.40" stroke="#333" stroke-width="0.9"/><line x1="378.40" y1="303.40" x2="409.80" y2="303.40" stroke="#333" stroke-width="0.9"/><line x1="378.40" y1="311.40" x2="409.80" y2="311.40" stroke="#333" stroke-width="0.9"/><line x1="378.40" y1="319.40" x2="409.80" y2="319.40" stroke="#333" stroke-width="0.9"/><line x1="378.40" y1="327.40" x2="409.80" y2="327.40" stroke="#333" stroke-width="0.9"/><rect x="377.90" y="285.40" width="32.40" height="2.4" fill="#1b1b1b"/><circle cx="403.52" cy="291.40" r="2.4" fill="#1b1b1b"/><circle cx="390.96" cy="299.40" r="2.4" fill="#1b1b1b"/><circle cx="397.24" cy="299.40" r="2.4" fill="#1b1b1b"/><path d="M376.40,280.40 L380.40,284.40 M376.40,284.40 L380.40,280.40" stroke="#1b1b1b" stroke-width="0.9"/><circle cx="384.68" cy="282.40" r="2.1" fill="none" stroke="#1b1b1b" stroke-width="0.9"/><circle cx="409.80" cy="282.40" r="2.1" fill="none" stroke="#1b1b1b" stroke-width="0.9"/><text x="383.30" y="274.70" font-family="Liberation Serif" font-size="13.6" font-weight="bold" font-style="normal" fill="#1b1b1b" text-anchor="start" >Am</text><line x1="744.30" y1="287.40" x2="744.30" y2="327.40" stroke="#333" stroke-width="0.9"/><line x1="750.58" y1="287.40" x2="750.58" y2="327.40" stroke="#333" stroke-width="0.9"/><line x1="756.86" y1="287.40" x2="756.86" y2="327.40" stroke="#333" stroke-width="0.9"/><line x1="763.14" y1="287.40" x2="763.14" y2="327.40" stroke="#333" stroke-width="0.9"/><line x1="769.42" y1="287.40" x2="769.42" y2="327.40" stroke="#333" stroke-width="0.9"/><line x1="775.70" y1="287.40" x2="775.70" y2="327.40" stroke="#333" stroke-width="0.9"/><line x1="744.30" y1="287.40" x2="775.70" y2="287.40" stroke="#333" stroke-width="0.9"/><line x1="744.30" y1="295.40" x2="775.70" y2="295.40" stroke="#333" stroke-width="0.9"/><line x1="744.30" y1="303.40" x2="775.70" y2="303.40" stroke="#333" stroke-width="0.9"/><line x1="744.30" y1="311.40" x2="775.70" y2="311.40" stroke="#333" stroke-width="0.9"/><line x1="744.30" y1="319.40" x2="775.70" y2="319.40" stroke="#333" stroke-width="0.9"/><line x1="744.30" y1="327.40" x2="775.70" y2="327.40" stroke="#333" stroke-width="0.9"/><rect x="743.80" y="285.40" width="32.40" height="2.4" fill="#1b1b1b"/><circle cx="744.30" cy="307.40" r="2.4" fill="#1b1b1b"/><circle cx="750.58" cy="299.40" r="2.4" fill="#1b1b1b"/><circle cx="775.70" cy="291.40" r="2.4" fill="#1b1b1b"/><circle cx="756.86" cy="282.40" r="2.1" fill="none" stroke="#1b1b1b" stroke-width="0.9"/><circle cx="763.14" cy="282.40" r="2.1" fill="none" stroke="#1b1b1b" stroke-width="0.9"/><circle cx="769.42" cy="282.40" r="2.1" fill="none" stroke="#1b1b1b" stroke-width="0.9"/><text x="751.00" y="275.00" font-family="Liberation Serif" font-size="13.6" font-weight="bold" font-style="normal" fill="#1b1b1b" text-anchor="start" >G7</text><line x1="332" y1="602.60" x2="1102" y2="602.60" stroke="#a9aaab" stroke-width="1"/><line x1="332" y1="608.62" x2="1102" y2="608.62" stroke="#a9aaab" stroke-width="1"/><line x1="332" y1="614.64" x2="1102" y2="614.64" stroke="#a9aaab" stroke-width="1"/><line x1="332" y1="620.66" x2="1102" y2="620.66" stroke="#a9aaab" stroke-width="1"/><line x1="332" y1="626.68" x2="1102" y2="626.68" stroke="#a9aaab" stroke-width="1"/><line x1="332" y1="668.40" x2="1102" y2="668.40" stroke="#a9aaab" stroke-width="1"/><line x1="332" y1="677.52" x2="1102" y2="677.52" stroke="#a9aaab" stroke-width="1"/><line x1="332" y1="686.64" x2="1102" y2="686.64" stroke="#a9aaab" stroke-width="1"/><line x1="332" y1="695.76" x2="1102" y2="695.76" stroke="#a9aaab" stroke-width="1"/><line x1="332" y1="704.88" x2="1102" y2="704.88" stroke="#a9aaab" stroke-width="1"/><line x1="332" y1="714.00" x2="1102" y2="714.00" stroke="#a9aaab" stroke-width="1"/><line x1="331.5" y1="602.60" x2="331.5" y2="714.00" stroke="#222" stroke-width="1.0"/><path d="M341.70,633.10 C342.10,637.40 347.60,637.40 347.20,632.10 L345.10,610.50 C344.10,604.60 344.10,595.10 346.70,594.30" fill="none" stroke="#1b1b1b" stroke-width="1.25" stroke-linecap="round"/><path d="M346.70,594.30 C350.10,595.10 350.00,602.10 347.80,605.40 C344.30,610.10 336.70,614.10 336.70,619.80" fill="none" stroke="#1b1b1b" stroke-width="2.5" stroke-linecap="round"/><path d="M336.70,619.80 C336.70,624.60 340.80,626.40 344.10,626.40 C348.80,626.40 351.80,623.60 351.80,620.60 C351.80,616.80 348.80,615.30 346.20,615.30 C343.30,615.30 341.80,617.60 342.30,620.10 C342.70,621.90 343.20,622.90 343.50,623.20" fill="none" stroke="#1b1b1b" stroke-width="1.9" stroke-linecap="round"/><circle cx="341.70" cy="632.80" r="2.5" fill="#1b1b1b"/><text x="343.70" y="683.90" font-family="Liberation Sans" font-size="14.8" font-weight="normal" font-style="normal" fill="#222" text-anchor="middle" >T</text><text x="343.70" y="696.30" font-family="Liberation Sans" font-size="14.8" font-weight="normal" font-style="normal" fill="#222" text-anchor="middle" >A</text><text x="343.70" y="708.70" font-family="Liberation Sans" font-size="14.8" font-weight="normal" font-style="normal" fill="#222" text-anchor="middle" >B</text><text x="359.00" y="600.00" font-family="Liberation Serif" font-size="8" font-weight="normal" font-style="normal" fill="#9a9a9a" text-anchor="middle" >3</text><line x1="364.50" y1="632.70" x2="375.50" y2="632.70" stroke="#a9aaab" stroke-width="1"/><line x1="364.50" y1="638.72" x2="375.50" y2="638.72" stroke="#a9aaab" stroke-width="1"/><line x1="364.50" y1="644.74" x2="375.50" y2="644.74" stroke="#a9aaab" stroke-width="1"/><ellipse cx="370.00" cy="602.60" rx="3.85" ry="2.85" transform="rotate(-22 370.00 602.60)" fill="#1b1b1b"/><ellipse cx="370.00" cy="611.63" rx="3.85" ry="2.85" transform="rotate(-22 370.00 611.63)" fill="#1b1b1b"/><ellipse cx="370.00" cy="617.65" rx="3.85" ry="2.85" transform="rotate(-22 370.00 617.65)" fill="#1b1b1b"/><ellipse cx="370.00" cy="623.67" rx="3.85" ry="2.85" transform="rotate(-22 370.00 623.67)" fill="#1b1b1b"/><ellipse cx="370.00" cy="632.70" rx="3.85" ry="2.85" transform="rotate(-22 370.00 632.70)" fill="#1b1b1b"/><ellipse cx="370.00" cy="644.74" rx="3.85" ry="2.85" transform="rotate(-22 370.00 644.74)" fill="#1b1b1b"/><line x1="373.50" y1="583.20" x2="373.50" y2="644.74" stroke="#1b1b1b" stroke-width="1.2"/><line x1="412.50" y1="632.70" x2="423.50" y2="632.70" stroke="#a9aaab" stroke-width="1"/><line x1="412.50" y1="638.72" x2="423.50" y2="638.72" stroke="#a9aaab" stroke-width="1"/><line x1="412.50" y1="644.74" x2="423.50" y2="644.74" stroke="#a9aaab" stroke-width="1"/><ellipse cx="418.00" cy="602.60" rx="3.85" ry="2.85" transform="rotate(-22 418.00 602.60)" fill="#1b1b1b"/><ellipse cx="418.00" cy="611.63" rx="3.85" ry="2.85" transform="rotate(-22 418.00 611.63)" fill="#1b1b1b"/><ellipse cx="418.00" cy="617.65" rx="3.85" ry="2.85" transform="rotate(-22 418.00 617.65)" fill="#1b1b1b"/><ellipse cx="418.00" cy="623.67" rx="3.85" ry="2.85" transform="rotate(-22 418.00 623.67)" fill="#1b1b1b"/><ellipse cx="418.00" cy="632.70" rx="3.85" ry="2.85" transform="rotate(-22 418.00 632.70)" fill="#1b1b1b"/><ellipse cx="418.00" cy="644.74" rx="3.85" ry="2.85" transform="rotate(-22 418.00 644.74)" fill="#1b1b1b"/><line x1="421.50" y1="583.20" x2="421.50" y2="644.74" stroke="#1b1b1b" stroke-width="1.2"/><polygon points="372.90,583.20 422.10,583.20 422.10,586.10 372.90,586.10" fill="#1b1b1b"/><circle cx="464.90" cy="611.80" r="1.6" fill="#1b1b1b"/><path d="M464.00,612.60 Q466.50,613.60 469.10,610.80 L465.90,620.80" fill="none" stroke="#1b1b1b" stroke-width="1.2"/><line x1="466.00" y1="590.70" x2="466.00" y2="597.30" stroke="#1b1b1b" stroke-width="0.95"/><line x1="463.14" y1="592.35" x2="468.86" y2="595.65" stroke="#1b1b1b" stroke-width="0.95"/><line x1="463.14" y1="595.65" x2="468.86" y2="592.35" stroke="#1b1b1b" stroke-width="0.95"/><text x="407.40" y="574.80" font-family="Liberation Serif" font-size="11" font-weight="normal" font-style="italic" fill="#333" text-anchor="start" >rasg.</text><line x1="507.80" y1="632.70" x2="518.80" y2="632.70" stroke="#a9aaab" stroke-width="1"/><line x1="507.80" y1="638.72" x2="518.80" y2="638.72" stroke="#a9aaab" stroke-width="1"/><line x1="507.80" y1="644.74" x2="518.80" y2="644.74" stroke="#a9aaab" stroke-width="1"/><ellipse cx="513.30" cy="602.60" rx="3.85" ry="2.85" transform="rotate(-22 513.30 602.60)" fill="#1b1b1b"/><ellipse cx="513.30" cy="611.63" rx="3.85" ry="2.85" transform="rotate(-22 513.30 611.63)" fill="#1b1b1b"/><ellipse cx="513.30" cy="617.65" rx="3.85" ry="2.85" transform="rotate(-22 513.30 617.65)" fill="#1b1b1b"/><ellipse cx="513.30" cy="623.67" rx="3.85" ry="2.85" transform="rotate(-22 513.30 623.67)" fill="#1b1b1b"/><ellipse cx="513.30" cy="632.70" rx="3.85" ry="2.85" transform="rotate(-22 513.30 632.70)" fill="#1b1b1b"/><ellipse cx="513.30" cy="644.74" rx="3.85" ry="2.85" transform="rotate(-22 513.30 644.74)" fill="#1b1b1b"/><line x1="516.80" y1="584.90" x2="516.80" y2="644.74" stroke="#1b1b1b" stroke-width="1.2"/><path d="M516.80,584.90 C517.80,590.90 524.30,593.90 521.80,603.90 C522.80,595.90 518.30,593.90 516.80,590.90 Z" fill="#1b1b1b"/><line x1="555.50" y1="632.70" x2="566.50" y2="632.70" stroke="#a9aaab" stroke-width="1"/><line x1="555.50" y1="638.72" x2="566.50" y2="638.72" stroke="#a9aaab" stroke-width="1"/><line x1="555.50" y1="644.74" x2="566.50" y2="644.74" stroke="#a9aaab" stroke-width="1"/><path d="M558.00,600.00 L564.00,605.20 M558.00,605.20 L564.00,600.00" stroke="#1b1b1b" stroke-width="0.9"/><path d="M558.00,609.03 L564.00,614.23 M558.00,614.23 L564.00,609.03" stroke="#1b1b1b" stroke-width="0.9"/><path d="M558.00,615.05 L564.00,620.25 M558.00,620.25 L564.00,615.05" stroke="#1b1b1b" stroke-width="0.9"/><path d="M558.00,621.07 L564.00,626.27 M558.00,626.27 L564.00,621.07" stroke="#1b1b1b" stroke-width="0.9"/><path d="M558.00,630.10 L564.00,635.30 M558.00,635.30 L564.00,630.10" stroke="#1b1b1b" stroke-width="0.9"/><path d="M558.00,642.14 L564.00,647.34 M558.00,647.34 L564.00,642.14" stroke="#1b1b1b" stroke-width="0.9"/><line x1="564.2" y1="585" x2="564.2" y2="644.74" stroke="#1b1b1b" stroke-width="1.1"/><path d="M564.2,585 C565.2,591 571.7,594 569.2,604 C570.2,596 565.7,594 564.2,591 Z" fill="#1b1b1b"/><path d="M557.50,651.00 L564.50,653.80 L557.50,656.60" fill="none" stroke="#1b1b1b" stroke-width="1.1" stroke-linejoin="miter"/><circle cx="607.40" cy="611.80" r="1.6" fill="#1b1b1b"/><path d="M606.50,612.60 Q609.00,613.60 611.60,610.80 L608.40,620.80" fill="none" stroke="#1b1b1b" stroke-width="1.2"/><line x1="609.00" y1="634.20" x2="609.00" y2="640.80" stroke="#1b1b1b" stroke-width="0.95"/><line x1="606.14" y1="635.85" x2="611.86" y2="639.15" stroke="#1b1b1b" stroke-width="0.95"/><line x1="606.14" y1="639.15" x2="611.86" y2="635.85" stroke="#1b1b1b" stroke-width="0.95"/><line x1="650.30" y1="632.70" x2="661.30" y2="632.70" stroke="#a9aaab" stroke-width="1"/><line x1="650.30" y1="638.72" x2="661.30" y2="638.72" stroke="#a9aaab" stroke-width="1"/><line x1="650.30" y1="644.74" x2="661.30" y2="644.74" stroke="#a9aaab" stroke-width="1"/><ellipse cx="655.80" cy="602.60" rx="3.85" ry="2.85" transform="rotate(-22 655.80 602.60)" fill="#1b1b1b"/><ellipse cx="655.80" cy="611.63" rx="3.85" ry="2.85" transform="rotate(-22 655.80 611.63)" fill="#1b1b1b"/><ellipse cx="655.80" cy="617.65" rx="3.85" ry="2.85" transform="rotate(-22 655.80 617.65)" fill="#1b1b1b"/><ellipse cx="655.80" cy="623.67" rx="3.85" ry="2.85" transform="rotate(-22 655.80 623.67)" fill="#1b1b1b"/><ellipse cx="655.80" cy="632.70" rx="3.85" ry="2.85" transform="rotate(-22 655.80 632.70)" fill="#1b1b1b"/><ellipse cx="655.80" cy="644.74" rx="3.85" ry="2.85" transform="rotate(-22 655.80 644.74)" fill="#1b1b1b"/><line x1="659.30" y1="588.00" x2="659.30" y2="644.74" stroke="#1b1b1b" stroke-width="1.2"/><text x="645.80" y="579.80" font-family="Liberation Serif" font-size="11" font-weight="normal" font-style="italic" fill="#333" text-anchor="start" >rasg.</text><line x1="669.80" y1="578.30" x2="854.60" y2="578.30" stroke="#333" stroke-width="0.9" stroke-dasharray="2.8,2.6"/><line x1="854.60" y1="575.80" x2="854.60" y2="580.80" stroke="#333" stroke-width="0.9"/><rect x="366.90" y="664.40" width="6.20" height="8" fill="#f4f5f6"/><text x="370.00" y="671.70" font-family="Liberation Sans" font-size="9.2" font-weight="normal" font-style="normal" fill="#222" text-anchor="middle" >1</text><rect x="366.90" y="673.52" width="6.20" height="8" fill="#f4f5f6"/><text x="370.00" y="680.82" font-family="Liberation Sans" font-size="9.2" font-weight="normal" font-style="normal" fill="#222" text-anchor="middle" >1</text><rect x="366.90" y="682.64" width="6.20" height="8" fill="#f4f5f6"/><text x="370.00" y="689.94" font-family="Liberation Sans" font-size="9.2" font-weight="normal" font-style="normal" fill="#222" text-anchor="middle" >2</text><rect x="366.90" y="691.76" width="6.20" height="8" fill="#f4f5f6"/><text x="370.00" y="699.06" font-family="Liberation Sans" font-size="9.2" font-weight="normal" font-style="normal" fill="#222" text-anchor="middle" >3</text><rect x="366.90" y="700.88" width="6.20" height="8" fill="#f4f5f6"/><text x="370.00" y="708.18" font-family="Liberation Sans" font-size="9.2" font-weight="normal" font-style="normal" fill="#222" text-anchor="middle" >3</text><rect x="366.90" y="710.00" width="6.20" height="8" fill="#f4f5f6"/><text x="370.00" y="717.30" font-family="Liberation Sans" font-size="9.2" font-weight="normal" font-style="normal" fill="#222" text-anchor="middle" >1</text><rect x="414.90" y="664.40" width="6.20" height="8" fill="#f4f5f6"/><text x="418.00" y="671.70" font-family="Liberation Sans" font-size="9.2" font-weight="normal" font-style="normal" fill="#222" text-anchor="middle" >1</text><rect x="414.90" y="673.52" width="6.20" height="8" fill="#f4f5f6"/><text x="418.00" y="680.82" font-family="Liberation Sans" font-size="9.2" font-weight="normal" font-style="normal" fill="#222" text-anchor="middle" >1</text><rect x="414.90" y="682.64" width="6.20" height="8" fill="#f4f5f6"/><text x="418.00" y="689.94" font-family="Liberation Sans" font-size="9.2" font-weight="normal" font-style="normal" fill="#222" text-anchor="middle" >2</text><rect x="414.90" y="691.76" width="6.20" height="8" fill="#f4f5f6"/><text x="418.00" y="699.06" font-family="Liberation Sans" font-size="9.2" font-weight="normal" font-style="normal" fill="#222" text-anchor="middle" >3</text><rect x="414.90" y="700.88" width="6.20" height="8" fill="#f4f5f6"/><text x="418.00" y="708.18" font-family="Liberation Sans" font-size="9.2" font-weight="normal" font-style="normal" fill="#222" text-anchor="middle" >3</text><rect x="414.90" y="710.00" width="6.20" height="8" fill="#f4f5f6"/><text x="418.00" y="717.30" font-family="Liberation Sans" font-size="9.2" font-weight="normal" font-style="normal" fill="#222" text-anchor="middle" >1</text><rect x="510.20" y="664.40" width="6.20" height="8" fill="#f4f5f6"/><text x="513.30" y="671.70" font-family="Liberation Sans" font-size="9.2" font-weight="normal" font-style="normal" fill="#222" text-anchor="middle" >1</text><rect x="510.20" y="673.52" width="6.20" height="8" fill="#f4f5f6"/><text x="513.30" y="680.82" font-family="Liberation Sans" font-size="9.2" font-weight="normal" font-style="normal" fill="#222" text-anchor="middle" >1</text><rect x="510.20" y="682.64" width="6.20" height="8" fill="#f4f5f6"/><text x="513.30" y="689.94" font-family="Liberation Sans" font-size="9.2" font-weight="normal" font-style="normal" fill="#222" text-anchor="middle" >2</text><rect x="510.20" y="691.76" width="6.20" height="8" fill="#f4f5f6"/><text x="513.30" y="699.06" font-family="Liberation Sans" font-size="9.2" font-weight="normal" font-style="normal" fill="#222" text-anchor="middle" >3</text><rect x="510.20" y="700.88" width="6.20" height="8" fill="#f4f5f6"/><text x="513.30" y="708.18" font-family="Liberation Sans" font-size="9.2" font-weight="normal" font-style="normal" fill="#222" text-anchor="middle" >3</text><rect x="510.20" y="710.00" width="6.20" height="8" fill="#f4f5f6"/><text x="513.30" y="717.30" font-family="Liberation Sans" font-size="9.2" font-weight="normal" font-style="normal" fill="#222" text-anchor="middle" >1</text><rect x="652.70" y="664.40" width="6.20" height="8" fill="#f4f5f6"/><text x="655.80" y="671.70" font-family="Liberation Sans" font-size="9.2" font-weight="normal" font-style="normal" fill="#222" text-anchor="middle" >1</text><rect x="652.70" y="673.52" width="6.20" height="8" fill="#f4f5f6"/><text x="655.80" y="680.82" font-family="Liberation Sans" font-size="9.2" font-weight="normal" font-style="normal" fill="#222" text-anchor="middle" >1</text><rect x="652.70" y="682.64" width="6.20" height="8" fill="#f4f5f6"/><text x="655.80" y="689.94" font-family="Liberation Sans" font-size="9.2" font-weight="normal" font-style="normal" fill="#222" text-anchor="middle" >2</text><rect x="652.70" y="691.76" width="6.20" height="8" fill="#f4f5f6"/><text x="655.80" y="699.06" font-family="Liberation Sans" font-size="9.2" font-weight="normal" font-style="normal" fill="#222" text-anchor="middle" >3</text><rect x="652.70" y="700.88" width="6.20" height="8" fill="#f4f5f6"/><text x="655.80" y="708.18" font-family="Liberation Sans" font-size="9.2" font-weight="normal" font-style="normal" fill="#222" text-anchor="middle" >3</text><rect x="652.70" y="710.00" width="6.20" height="8" fill="#f4f5f6"/><text x="655.80" y="717.30" font-family="Liberation Sans" font-size="9.2" font-weight="normal" font-style="normal" fill="#222" text-anchor="middle" >1</text><rect x="557.90" y="664.40" width="6.20" height="8" fill="#f4f5f6"/><text x="561.00" y="671.70" font-family="Liberation Sans" font-size="9.2" font-weight="normal" font-style="normal" fill="#222" text-anchor="middle" >X</text><rect x="557.90" y="673.52" width="6.20" height="8" fill="#f4f5f6"/><text x="561.00" y="680.82" font-family="Liberation Sans" font-size="9.2" font-weight="normal" font-style="normal" fill="#222" text-anchor="middle" >X</text><rect x="557.90" y="682.64" width="6.20" height="8" fill="#f4f5f6"/><text x="561.00" y="689.94" font-family="Liberation Sans" font-size="9.2" font-weight="normal" font-style="normal" fill="#222" text-anchor="middle" >X</text><rect x="557.90" y="691.76" width="6.20" height="8" fill="#f4f5f6"/><text x="561.00" y="699.06" font-family="Liberation Sans" font-size="9.2" font-weight="normal" font-style="normal" fill="#222" text-anchor="middle" >X</text><rect x="557.90" y="700.88" width="6.20" height="8" fill="#f4f5f6"/><text x="561.00" y="708.18" font-family="Liberation Sans" font-size="9.2" font-weight="normal" font-style="normal" fill="#222" text-anchor="middle" >X</text><rect x="557.90" y="710.00" width="6.20" height="8" fill="#f4f5f6"/><text x="561.00" y="717.30" font-family="Liberation Sans" font-size="9.2" font-weight="normal" font-style="normal" fill="#222" text-anchor="middle" >X</text><line x1="726.5" y1="602.60" x2="726.5" y2="626.68" stroke="#3a3a3a" stroke-width="1.1"/><line x1="726.5" y1="668.40" x2="726.5" y2="714.00" stroke="#3a3a3a" stroke-width="1.1"/><text x="725.60" y="600.00" font-family="Liberation Serif" font-size="8" font-weight="normal" font-style="normal" fill="#9a9a9a" text-anchor="middle" >4</text><line x1="738.70" y1="632.70" x2="749.70" y2="632.70" stroke="#a9aaab" stroke-width="1"/><line x1="738.70" y1="638.72" x2="749.70" y2="638.72" stroke="#a9aaab" stroke-width="1"/><line x1="738.70" y1="644.74" x2="749.70" y2="644.74" stroke="#a9aaab" stroke-width="1"/><ellipse cx="744.20" cy="605.61" rx="3.85" ry="2.85" transform="rotate(-22 744.20 605.61)" fill="#1b1b1b"/><ellipse cx="744.20" cy="614.64" rx="3.85" ry="2.85" transform="rotate(-22 744.20 614.64)" fill="#1b1b1b"/><ellipse cx="750.60" cy="620.66" rx="3.85" ry="2.85" transform="rotate(-22 750.60 620.66)" fill="#1b1b1b"/><ellipse cx="744.20" cy="623.67" rx="3.85" ry="2.85" transform="rotate(-22 744.20 623.67)" fill="#1b1b1b"/><ellipse cx="744.20" cy="635.71" rx="3.85" ry="2.85" transform="rotate(-22 744.20 635.71)" fill="#1b1b1b"/><ellipse cx="744.20" cy="647.75" rx="3.85" ry="2.85" transform="rotate(-22 744.20 647.75)" fill="#1b1b1b"/><line x1="747.70" y1="591.00" x2="747.70" y2="647.75" stroke="#1b1b1b" stroke-width="1.2"/><g stroke="#1b1b1b"><line x1="735.30" y1="615.16" x2="735.30" y2="627.16" stroke-width="0.8"/><line x1="737.90" y1="614.66" x2="737.90" y2="626.66" stroke-width="0.8"/><line x1="733.50" y1="619.66" x2="739.50" y2="618.16" stroke-width="1.6"/><line x1="733.50" y1="624.16" x2="739.50" y2="622.66" stroke-width="1.6"/></g><circle cx="744.5" cy="655" r="0.9" fill="#1b1b1b"/><line x1="839.20" y1="632.70" x2="850.20" y2="632.70" stroke="#a9aaab" stroke-width="1"/><line x1="839.20" y1="638.72" x2="850.20" y2="638.72" stroke="#a9aaab" stroke-width="1"/><line x1="839.20" y1="644.74" x2="850.20" y2="644.74" stroke="#a9aaab" stroke-width="1"/><ellipse cx="844.70" cy="605.61" rx="3.1" ry="2.0" transform="rotate(-28 844.70 605.61)" fill="none" stroke="#1b1b1b" stroke-width="1.1"/><ellipse cx="844.70" cy="614.64" rx="3.1" ry="2.0" transform="rotate(-28 844.70 614.64)" fill="none" stroke="#1b1b1b" stroke-width="1.1"/><ellipse cx="851.10" cy="620.66" rx="3.1" ry="2.0" transform="rotate(-28 851.10 620.66)" fill="none" stroke="#1b1b1b" stroke-width="1.1"/><ellipse cx="844.70" cy="623.67" rx="3.1" ry="2.0" transform="rotate(-28 844.70 623.67)" fill="none" stroke="#1b1b1b" stroke-width="1.1"/><ellipse cx="844.70" cy="635.71" rx="3.1" ry="2.0" transform="rotate(-28 844.70 635.71)" fill="none" stroke="#1b1b1b" stroke-width="1.1"/><ellipse cx="844.70" cy="647.75" rx="3.1" ry="2.0" transform="rotate(-28 844.70 647.75)" fill="none" stroke="#1b1b1b" stroke-width="1.1"/><line x1="848.20" y1="591.00" x2="848.20" y2="647.75" stroke="#1b1b1b" stroke-width="1.2"/><path d="M987.20,605.80 L991.60,611.20 Q988.40,613.80 989.20,615.80 L991.80,619.20 Q987.50,617.20 988.40,623.20 Q984.40,619.10 988.80,617.80 L986.20,614.80 Q989.80,612.20 988.60,609.80 Z" fill="#1b1b1b" stroke="#1b1b1b" stroke-width="0.7" stroke-linejoin="round"/><line x1="989.50" y1="589.70" x2="989.50" y2="596.30" stroke="#1b1b1b" stroke-width="0.95"/><line x1="986.64" y1="591.35" x2="992.36" y2="594.65" stroke="#1b1b1b" stroke-width="0.95"/><line x1="986.64" y1="594.65" x2="992.36" y2="591.35" stroke="#1b1b1b" stroke-width="0.95"/><rect x="743.90" y="664.40" width="6.20" height="8" fill="#f4f5f6"/><text x="747.00" y="671.70" font-family="Liberation Sans" font-size="9.2" font-weight="normal" font-style="normal" fill="#222" text-anchor="middle" >0</text><rect x="743.90" y="673.52" width="6.20" height="8" fill="#f4f5f6"/><text x="747.00" y="680.82" font-family="Liberation Sans" font-size="9.2" font-weight="normal" font-style="normal" fill="#222" text-anchor="middle" >0</text><rect x="743.90" y="682.64" width="6.20" height="8" fill="#f4f5f6"/><text x="747.00" y="689.94" font-family="Liberation Sans" font-size="9.2" font-weight="normal" font-style="normal" fill="#222" text-anchor="middle" >1</text><rect x="743.90" y="691.76" width="6.20" height="8" fill="#f4f5f6"/><text x="747.00" y="699.06" font-family="Liberation Sans" font-size="9.2" font-weight="normal" font-style="normal" fill="#222" text-anchor="middle" >3</text><rect x="743.90" y="700.88" width="6.20" height="8" fill="#f4f5f6"/><text x="747.00" y="708.18" font-family="Liberation Sans" font-size="9.2" font-weight="normal" font-style="normal" fill="#222" text-anchor="middle" >2</text><rect x="743.90" y="710.00" width="6.20" height="8" fill="#f4f5f6"/><text x="747.00" y="717.30" font-family="Liberation Sans" font-size="9.2" font-weight="normal" font-style="normal" fill="#222" text-anchor="middle" >0</text><rect x="844.40" y="664.40" width="6.20" height="8" fill="#f4f5f6"/><text x="847.50" y="671.70" font-family="Liberation Sans" font-size="9.2" font-weight="normal" font-style="normal" fill="#222" text-anchor="middle" >0</text><rect x="844.40" y="673.52" width="6.20" height="8" fill="#f4f5f6"/><text x="847.50" y="680.82" font-family="Liberation Sans" font-size="9.2" font-weight="normal" font-style="normal" fill="#222" text-anchor="middle" >0</text><rect x="844.40" y="682.64" width="6.20" height="8" fill="#f4f5f6"/><text x="847.50" y="689.94" font-family="Liberation Sans" font-size="9.2" font-weight="normal" font-style="normal" fill="#222" text-anchor="middle" >1</text><rect x="844.40" y="691.76" width="6.20" height="8" fill="#f4f5f6"/><text x="847.50" y="699.06" font-family="Liberation Sans" font-size="9.2" font-weight="normal" font-style="normal" fill="#222" text-anchor="middle" >3</text><rect x="844.40" y="700.88" width="6.20" height="8" fill="#f4f5f6"/><text x="847.50" y="708.18" font-family="Liberation Sans" font-size="9.2" font-weight="normal" font-style="normal" fill="#222" text-anchor="middle" >2</text><rect x="844.40" y="710.00" width="6.20" height="8" fill="#f4f5f6"/><text x="847.50" y="717.30" font-family="Liberation Sans" font-size="9.2" font-weight="normal" font-style="normal" fill="#222" text-anchor="middle" >0</text><rect x="1100.00" y="602.60" width="3.2" height="24.08" fill="#1b1b1b"/><line x1="1097.6" y1="602.60" x2="1097.6" y2="626.68" stroke="#3a3a3a" stroke-width="0.9"/><circle cx="1094.60" cy="611.63" r="1.1" fill="#1b1b1b"/><circle cx="1094.60" cy="617.65" r="1.1" fill="#1b1b1b"/><rect x="1100.00" y="668.40" width="3.2" height="45.60" fill="#1b1b1b"/><line x1="1097.6" y1="668.40" x2="1097.6" y2="714.00" stroke="#3a3a3a" stroke-width="0.9"/><circle cx="1094.60" cy="682.08" r="1.1" fill="#1b1b1b"/><circle cx="1094.60" cy="700.32" r="1.1" fill="#1b1b1b"/><line x1="355.30" y1="524.40" x2="355.30" y2="564.40" stroke="#333" stroke-width="0.9"/><line x1="361.50" y1="524.40" x2="361.50" y2="564.40" stroke="#333" stroke-width="0.9"/><line x1="367.70" y1="524.40" x2="367.70" y2="564.40" stroke="#333" stroke-width="0.9"/><line x1="373.90" y1="524.40" x2="373.90" y2="564.40" stroke="#333" stroke-width="0.9"/><line x1="380.10" y1="524.40" x2="380.10" y2="564.40" stroke="#333" stroke-width="0.9"/><line x1="386.30" y1="524.40" x2="386.30" y2="564.40" stroke="#333" stroke-width="0.9"/><line x1="355.30" y1="524.40" x2="386.30" y2="524.40" stroke="#333" stroke-width="0.9"/><line x1="355.30" y1="532.40" x2="386.30" y2="532.40" stroke="#333" stroke-width="0.9"/><line x1="355.30" y1="540.40" x2="386.30" y2="540.40" stroke="#333" stroke-width="0.9"/><line x1="355.30" y1="548.40" x2="386.30" y2="548.40" stroke="#333" stroke-width="0.9"/><line x1="355.30" y1="556.40" x2="386.30" y2="556.40" stroke="#333" stroke-width="0.9"/><line x1="355.30" y1="564.40" x2="386.30" y2="564.40" stroke="#333" stroke-width="0.9"/><rect x="354.80" y="522.40" width="32.00" height="2.4" fill="#1b1b1b"/><circle cx="373.90" cy="536.40" r="2.4" fill="#1b1b1b"/><circle cx="361.50" cy="544.40" r="2.4" fill="#1b1b1b"/><circle cx="367.70" cy="544.40" r="2.4" fill="#1b1b1b"/><rect x="352.80" y="526.20" width="36.00" height="4.4" rx="2.2" fill="#1b1b1b"/><text x="367.30" y="510.90" font-family="Liberation Serif" font-size="13.6" font-weight="bold" font-style="normal" fill="#1b1b1b" text-anchor="start" >F</text><line x1="731.10" y1="524.40" x2="731.10" y2="564.40" stroke="#333" stroke-width="0.9"/><line x1="737.38" y1="524.40" x2="737.38" y2="564.40" stroke="#333" stroke-width="0.9"/><line x1="743.66" y1="524.40" x2="743.66" y2="564.40" stroke="#333" stroke-width="0.9"/><line x1="749.94" y1="524.40" x2="749.94" y2="564.40" stroke="#333" stroke-width="0.9"/><line x1="756.22" y1="524.40" x2="756.22" y2="564.40" stroke="#333" stroke-width="0.9"/><line x1="762.50" y1="524.40" x2="762.50" y2="564.40" stroke="#333" stroke-width="0.9"/><line x1="731.10" y1="524.40" x2="762.50" y2="524.40" stroke="#333" stroke-width="0.9"/><line x1="731.10" y1="532.40" x2="762.50" y2="532.40" stroke="#333" stroke-width="0.9"/><line x1="731.10" y1="540.40" x2="762.50" y2="540.40" stroke="#333" stroke-width="0.9"/><line x1="731.10" y1="548.40" x2="762.50" y2="548.40" stroke="#333" stroke-width="0.9"/><line x1="731.10" y1="556.40" x2="762.50" y2="556.40" stroke="#333" stroke-width="0.9"/><line x1="731.10" y1="564.40" x2="762.50" y2="564.40" stroke="#333" stroke-width="0.9"/><rect x="730.60" y="522.40" width="32.40" height="2.4" fill="#1b1b1b"/><circle cx="737.38" cy="536.40" r="2.4" fill="#1b1b1b"/><circle cx="743.66" cy="544.40" r="2.4" fill="#1b1b1b"/><circle cx="749.94" cy="528.40" r="2.4" fill="#1b1b1b"/><circle cx="731.10" cy="519.40" r="2.1" fill="none" stroke="#1b1b1b" stroke-width="0.9"/><circle cx="756.22" cy="519.40" r="2.1" fill="none" stroke="#1b1b1b" stroke-width="0.9"/><circle cx="762.50" cy="519.40" r="2.1" fill="none" stroke="#1b1b1b" stroke-width="0.9"/><text x="725.40" y="511.20" font-family="Liberation Serif" font-size="13.6" font-weight="bold" font-style="normal" fill="#1b1b1b" text-anchor="start" >Eadd<tspan font-size="9">b</tspan>9</text><line x1="332" y1="844.50" x2="1102" y2="844.50" stroke="#a9aaab" stroke-width="1"/><line x1="332" y1="850.52" x2="1102" y2="850.52" stroke="#a9aaab" stroke-width="1"/><line x1="332" y1="856.54" x2="1102" y2="856.54" stroke="#a9aaab" stroke-width="1"/><line x1="332" y1="862.56" x2="1102" y2="862.56" stroke="#a9aaab" stroke-width="1"/><line x1="332" y1="868.58" x2="1102" y2="868.58" stroke="#a9aaab" stroke-width="1"/><line x1="331.5" y1="844.50" x2="331.5" y2="874.50" stroke="#222" stroke-width="1.0"/><path d="M341.90,875.00 C342.30,879.30 347.80,879.30 347.40,874.00 L345.30,852.40 C344.30,846.50 344.30,837.00 346.90,836.20" fill="none" stroke="#1b1b1b" stroke-width="1.25" stroke-linecap="round"/><path d="M346.90,836.20 C350.30,837.00 350.20,844.00 348.00,847.30 C344.50,852.00 336.90,856.00 336.90,861.70" fill="none" stroke="#1b1b1b" stroke-width="2.5" stroke-linecap="round"/><path d="M336.90,861.70 C336.90,866.50 341.00,868.30 344.30,868.30 C349.00,868.30 352.00,865.50 352.00,862.50 C352.00,858.70 349.00,857.20 346.40,857.20 C343.50,857.20 342.00,859.50 342.50,862.00 C342.90,863.80 343.40,864.80 343.70,865.10" fill="none" stroke="#1b1b1b" stroke-width="1.9" stroke-linecap="round"/><circle cx="341.90" cy="874.70" r="2.5" fill="#1b1b1b"/><rect x="358.00" y="844.50" width="2.8" height="24.08" fill="#1b1b1b"/><line x1="363.4" y1="844.50" x2="363.4" y2="868.58" stroke="#3a3a3a" stroke-width="0.9"/><circle cx="366.30" cy="853.53" r="1.1" fill="#1b1b1b"/><circle cx="366.30" cy="859.55" r="1.1" fill="#1b1b1b"/><text x="361.50" y="842.00" font-family="Liberation Serif" font-size="8" font-weight="normal" font-style="normal" fill="#9a9a9a" text-anchor="middle" >5</text><line x1="371.70" y1="838.48" x2="382.70" y2="838.48" stroke="#a9aaab" stroke-width="1"/><ellipse cx="377.20" cy="838.48" rx="3.85" ry="2.85" transform="rotate(-22 377.20 838.48)" fill="#1b1b1b"/><ellipse cx="377.20" cy="847.51" rx="3.85" ry="2.85" transform="rotate(-22 377.20 847.51)" fill="#1b1b1b"/><ellipse cx="377.20" cy="853.53" rx="3.85" ry="2.85" transform="rotate(-22 377.20 853.53)" fill="#1b1b1b"/><ellipse cx="377.20" cy="859.55" rx="3.85" ry="2.85" transform="rotate(-22 377.20 859.55)" fill="#1b1b1b"/><ellipse cx="377.20" cy="868.58" rx="3.85" ry="2.85" transform="rotate(-22 377.20 868.58)" fill="#1b1b1b"/><line x1="380.70" y1="820.50" x2="380.70" y2="868.58" stroke="#1b1b1b" stroke-width="1.2"/><path d="M418.70,844.91 L424.70,850.11 M418.70,850.11 L424.70,844.91" stroke="#1b1b1b" stroke-width="0.9"/><path d="M418.70,850.93 L424.70,856.13 M418.70,856.13 L424.70,850.93" stroke="#1b1b1b" stroke-width="0.9"/><path d="M418.70,856.95 L424.70,862.15 M418.70,862.15 L424.70,856.95" stroke="#1b1b1b" stroke-width="0.9"/><line x1="425.3" y1="829.7" x2="425.3" y2="870" stroke="#1b1b1b" stroke-width="1.1"/><polygon points="380.10,820.50 425.90,829.50 425.90,832.40 380.10,823.40" fill="#1b1b1b"/><path d="M463.20,844.91 L469.20,850.11 M463.20,850.11 L469.20,844.91" stroke="#1b1b1b" stroke-width="0.9"/><path d="M463.20,850.93 L469.20,856.13 M463.20,856.13 L469.20,850.93" stroke="#1b1b1b" stroke-width="0.9"/><path d="M463.20,856.95 L469.20,862.15 M463.20,862.15 L469.20,856.95" stroke="#1b1b1b" stroke-width="0.9"/><line x1="469.6" y1="829.7" x2="469.6" y2="870" stroke="#1b1b1b" stroke-width="1.1"/><line x1="505.90" y1="838.48" x2="516.90" y2="838.48" stroke="#a9aaab" stroke-width="1"/><ellipse cx="511.40" cy="838.48" rx="3.85" ry="2.85" transform="rotate(-22 511.40 838.48)" fill="#1b1b1b"/><ellipse cx="511.40" cy="847.51" rx="3.85" ry="2.85" transform="rotate(-22 511.40 847.51)" fill="#1b1b1b"/><ellipse cx="511.40" cy="853.53" rx="3.85" ry="2.85" transform="rotate(-22 511.40 853.53)" fill="#1b1b1b"/><ellipse cx="511.40" cy="859.55" rx="3.85" ry="2.85" transform="rotate(-22 511.40 859.55)" fill="#1b1b1b"/><ellipse cx="511.40" cy="868.58" rx="3.85" ry="2.85" transform="rotate(-22 511.40 868.58)" fill="#1b1b1b"/><line x1="514.90" y1="818.40" x2="514.90" y2="868.58" stroke="#1b1b1b" stroke-width="1.2"/><polygon points="469.00,829.50 515.50,818.40 515.50,821.30 469.00,832.40" fill="#1b1b1b"/><path d="M428.00,845.50 C437.52,840.43 452.48,840.43 462.00,845.50 C452.48,841.43 437.52,841.43 428.00,845.50 Z" fill="#1b1b1b" stroke="#1b1b1b" stroke-width="0.5" stroke-linejoin="round"/><path d="M428.00,851.50 C437.52,846.43 452.48,846.43 462.00,851.50 C452.48,847.43 437.52,847.43 428.00,851.50 Z" fill="#1b1b1b" stroke="#1b1b1b" stroke-width="0.5" stroke-linejoin="round"/><line x1="466.20" y1="805.90" x2="466.20" y2="812.50" stroke="#1b1b1b" stroke-width="0.95"/><line x1="463.34" y1="807.55" x2="469.06" y2="810.85" stroke="#1b1b1b" stroke-width="0.95"/><line x1="463.34" y1="810.85" x2="469.06" y2="807.55" stroke="#1b1b1b" stroke-width="0.95"/><line x1="549.90" y1="838.48" x2="560.90" y2="838.48" stroke="#a9aaab" stroke-width="1"/><ellipse cx="555.40" cy="838.48" rx="3.85" ry="2.85" transform="rotate(-22 555.40 838.48)" fill="#1b1b1b"/><ellipse cx="555.40" cy="847.51" rx="3.85" ry="2.85" transform="rotate(-22 555.40 847.51)" fill="#1b1b1b"/><ellipse cx="555.40" cy="853.53" rx="3.85" ry="2.85" transform="rotate(-22 555.40 853.53)" fill="#1b1b1b"/><ellipse cx="555.40" cy="859.55" rx="3.85" ry="2.85" transform="rotate(-22 555.40 859.55)" fill="#1b1b1b"/><ellipse cx="555.40" cy="868.58" rx="3.85" ry="2.85" transform="rotate(-22 555.40 868.58)" fill="#1b1b1b"/><line x1="558.90" y1="820.50" x2="558.90" y2="868.58" stroke="#1b1b1b" stroke-width="1.2"/><path d="M558.90,820.50 C559.90,826.50 566.40,829.50 563.90,839.50 C564.90,831.50 560.40,829.50 558.90,826.50 Z" fill="#1b1b1b"/><line x1="599.50" y1="805.70" x2="599.50" y2="812.30" stroke="#1b1b1b" stroke-width="0.95"/><line x1="596.64" y1="807.35" x2="602.36" y2="810.65" stroke="#1b1b1b" stroke-width="0.95"/><line x1="596.64" y1="810.65" x2="602.36" y2="807.35" stroke="#1b1b1b" stroke-width="0.95"/><circle cx="597.90" cy="853.70" r="1.6" fill="#1b1b1b"/><path d="M597.00,854.50 Q599.50,855.50 602.10,852.70 L598.90,862.70" fill="none" stroke="#1b1b1b" stroke-width="1.2"/><line x1="638.90" y1="838.48" x2="649.90" y2="838.48" stroke="#a9aaab" stroke-width="1"/><ellipse cx="644.40" cy="838.48" rx="3.85" ry="2.85" transform="rotate(-22 644.40 838.48)" fill="#1b1b1b"/><ellipse cx="644.40" cy="847.51" rx="3.85" ry="2.85" transform="rotate(-22 644.40 847.51)" fill="#1b1b1b"/><ellipse cx="644.40" cy="853.53" rx="3.85" ry="2.85" transform="rotate(-22 644.40 853.53)" fill="#1b1b1b"/><ellipse cx="644.40" cy="859.55" rx="3.85" ry="2.85" transform="rotate(-22 644.40 859.55)" fill="#1b1b1b"/><ellipse cx="644.40" cy="868.58" rx="3.85" ry="2.85" transform="rotate(-22 644.40 868.58)" fill="#1b1b1b"/><line x1="647.90" y1="817.40" x2="647.90" y2="868.58" stroke="#1b1b1b" stroke-width="1.2"/><line x1="682.70" y1="838.48" x2="693.70" y2="838.48" stroke="#a9aaab" stroke-width="1"/><ellipse cx="688.20" cy="838.48" rx="3.85" ry="2.85" transform="rotate(-22 688.20 838.48)" fill="#1b1b1b"/><ellipse cx="688.20" cy="847.51" rx="3.85" ry="2.85" transform="rotate(-22 688.20 847.51)" fill="#1b1b1b"/><ellipse cx="688.20" cy="853.53" rx="3.85" ry="2.85" transform="rotate(-22 688.20 853.53)" fill="#1b1b1b"/><ellipse cx="688.20" cy="859.55" rx="3.85" ry="2.85" transform="rotate(-22 688.20 859.55)" fill="#1b1b1b"/><ellipse cx="688.20" cy="868.58" rx="3.85" ry="2.85" transform="rotate(-22 688.20 868.58)" fill="#1b1b1b"/><line x1="691.70" y1="817.40" x2="691.70" y2="868.58" stroke="#1b1b1b" stroke-width="1.2"/><polygon points="647.30,817.40 692.30,817.40 692.30,820.30 647.30,820.30" fill="#1b1b1b"/><line x1="736" y1="844.50" x2="736" y2="874.50" stroke="#3a3a3a" stroke-width="1.1"/><text x="735.50" y="842.00" font-family="Liberation Serif" font-size="8" font-weight="normal" font-style="normal" fill="#9a9a9a" text-anchor="middle" >6</text><line x1="746.30" y1="874.60" x2="757.30" y2="874.60" stroke="#a9aaab" stroke-width="1"/><line x1="746.30" y1="880.62" x2="757.30" y2="880.62" stroke="#a9aaab" stroke-width="1"/><ellipse cx="751.80" cy="841.49" rx="3.85" ry="2.85" transform="rotate(-22 751.80 841.49)" fill="#1b1b1b"/><ellipse cx="751.80" cy="850.52" rx="3.85" ry="2.85" transform="rotate(-22 751.80 850.52)" fill="#1b1b1b"/><ellipse cx="751.80" cy="856.54" rx="3.85" ry="2.85" transform="rotate(-22 751.80 856.54)" fill="#1b1b1b"/><ellipse cx="751.80" cy="862.56" rx="3.85" ry="2.85" transform="rotate(-22 751.80 862.56)" fill="#1b1b1b"/><ellipse cx="751.80" cy="871.59" rx="3.85" ry="2.85" transform="rotate(-22 751.80 871.59)" fill="#1b1b1b"/><ellipse cx="751.80" cy="883.63" rx="3.85" ry="2.85" transform="rotate(-22 751.80 883.63)" fill="#1b1b1b"/><line x1="755.30" y1="822.60" x2="755.30" y2="883.63" stroke="#1b1b1b" stroke-width="1.2"/><line x1="790.10" y1="874.60" x2="801.10" y2="874.60" stroke="#a9aaab" stroke-width="1"/><line x1="790.10" y1="880.62" x2="801.10" y2="880.62" stroke="#a9aaab" stroke-width="1"/><ellipse cx="795.60" cy="841.49" rx="3.85" ry="2.85" transform="rotate(-22 795.60 841.49)" fill="#1b1b1b"/><ellipse cx="795.60" cy="850.52" rx="3.85" ry="2.85" transform="rotate(-22 795.60 850.52)" fill="#1b1b1b"/><ellipse cx="795.60" cy="856.54" rx="3.85" ry="2.85" transform="rotate(-22 795.60 856.54)" fill="#1b1b1b"/><ellipse cx="795.60" cy="862.56" rx="3.85" ry="2.85" transform="rotate(-22 795.60 862.56)" fill="#1b1b1b"/><ellipse cx="795.60" cy="871.59" rx="3.85" ry="2.85" transform="rotate(-22 795.60 871.59)" fill="#1b1b1b"/><ellipse cx="795.60" cy="883.63" rx="3.85" ry="2.85" transform="rotate(-22 795.60 883.63)" fill="#1b1b1b"/><line x1="799.10" y1="822.60" x2="799.10" y2="883.63" stroke="#1b1b1b" stroke-width="1.2"/><line x1="832.90" y1="874.60" x2="843.90" y2="874.60" stroke="#a9aaab" stroke-width="1"/><line x1="832.90" y1="880.62" x2="843.90" y2="880.62" stroke="#a9aaab" stroke-width="1"/><ellipse cx="838.40" cy="841.49" rx="3.85" ry="2.85" transform="rotate(-22 838.40 841.49)" fill="#1b1b1b"/><ellipse cx="838.40" cy="850.52" rx="3.85" ry="2.85" transform="rotate(-22 838.40 850.52)" fill="#1b1b1b"/><ellipse cx="838.40" cy="856.54" rx="3.85" ry="2.85" transform="rotate(-22 838.40 856.54)" fill="#1b1b1b"/><ellipse cx="838.40" cy="862.56" rx="3.85" ry="2.85" transform="rotate(-22 838.40 862.56)" fill="#1b1b1b"/><ellipse cx="838.40" cy="871.59" rx="3.85" ry="2.85" transform="rotate(-22 838.40 871.59)" fill="#1b1b1b"/><ellipse cx="838.40" cy="883.63" rx="3.85" ry="2.85" transform="rotate(-22 838.40 883.63)" fill="#1b1b1b"/><line x1="841.90" y1="822.60" x2="841.90" y2="883.63" stroke="#1b1b1b" stroke-width="1.2"/><line x1="876.90" y1="874.60" x2="887.90" y2="874.60" stroke="#a9aaab" stroke-width="1"/><line x1="876.90" y1="880.62" x2="887.90" y2="880.62" stroke="#a9aaab" stroke-width="1"/><ellipse cx="882.40" cy="841.49" rx="3.85" ry="2.85" transform="rotate(-22 882.40 841.49)" fill="#1b1b1b"/><ellipse cx="882.40" cy="850.52" rx="3.85" ry="2.85" transform="rotate(-22 882.40 850.52)" fill="#1b1b1b"/><ellipse cx="882.40" cy="856.54" rx="3.85" ry="2.85" transform="rotate(-22 882.40 856.54)" fill="#1b1b1b"/><ellipse cx="882.40" cy="862.56" rx="3.85" ry="2.85" transform="rotate(-22 882.40 862.56)" fill="#1b1b1b"/><ellipse cx="882.40" cy="871.59" rx="3.85" ry="2.85" transform="rotate(-22 882.40 871.59)" fill="#1b1b1b"/><ellipse cx="882.40" cy="883.63" rx="3.85" ry="2.85" transform="rotate(-22 882.40 883.63)" fill="#1b1b1b"/><line x1="885.90" y1="822.60" x2="885.90" y2="883.63" stroke="#1b1b1b" stroke-width="1.2"/><polygon points="754.70,822.60 799.70,822.60 799.70,825.50 754.70,825.50" fill="#1b1b1b"/><polygon points="841.30,822.60 886.50,822.60 886.50,825.50 841.30,825.50" fill="#1b1b1b"/><path d="M801.00,839.29 C810.24,834.22 824.76,834.22 834.00,839.29 C824.76,835.22 810.24,835.22 801.00,839.29 Z" fill="#1b1b1b" stroke="#1b1b1b" stroke-width="0.5" stroke-linejoin="round"/><path d="M801.00,848.32 C810.24,843.25 824.76,843.25 834.00,848.32 C824.76,844.25 810.24,844.25 801.00,848.32 Z" fill="#1b1b1b" stroke="#1b1b1b" stroke-width="0.5" stroke-linejoin="round"/><path d="M801.00,854.34 C810.24,849.27 824.76,849.27 834.00,854.34 C824.76,850.27 810.24,850.27 801.00,854.34 Z" fill="#1b1b1b" stroke="#1b1b1b" stroke-width="0.5" stroke-linejoin="round"/><line x1="838.40" y1="805.70" x2="838.40" y2="812.30" stroke="#1b1b1b" stroke-width="0.95"/><line x1="835.54" y1="807.35" x2="841.26" y2="810.65" stroke="#1b1b1b" stroke-width="0.95"/><line x1="835.54" y1="810.65" x2="841.26" y2="807.35" stroke="#1b1b1b" stroke-width="0.95"/><line x1="925.00" y1="805.70" x2="925.00" y2="812.30" stroke="#1b1b1b" stroke-width="0.95"/><line x1="922.14" y1="807.35" x2="927.86" y2="810.65" stroke="#1b1b1b" stroke-width="0.95"/><line x1="922.14" y1="810.65" x2="927.86" y2="807.35" stroke="#1b1b1b" stroke-width="0.95"/><path d="M921.80,841.90 L927.80,847.10 M921.80,847.10 L927.80,841.90" stroke="#1b1b1b" stroke-width="0.9"/><path d="M921.80,853.94 L927.80,859.14 M921.80,859.14 L927.80,853.94" stroke="#1b1b1b" stroke-width="0.9"/><path d="M921.80,865.98 L927.80,871.18 M921.80,871.18 L927.80,865.98" stroke="#1b1b1b" stroke-width="0.9"/><line x1="928.3" y1="826.9" x2="928.3" y2="870" stroke="#1b1b1b" stroke-width="1.1"/><path d="M928.3,826.9 C929.3,833 935.8,836 933.3,846 C934.3,838 929.8,836 928.3,833 Z" fill="#1b1b1b"/><circle cx="967.90" cy="853.70" r="1.6" fill="#1b1b1b"/><path d="M967.00,854.50 Q969.50,855.50 972.10,852.70 L968.90,862.70" fill="none" stroke="#1b1b1b" stroke-width="1.2"/><line x1="1006.80" y1="874.60" x2="1017.80" y2="874.60" stroke="#a9aaab" stroke-width="1"/><line x1="1006.80" y1="880.62" x2="1017.80" y2="880.62" stroke="#a9aaab" stroke-width="1"/><ellipse cx="1012.30" cy="841.49" rx="3.85" ry="2.85" transform="rotate(-22 1012.30 841.49)" fill="#1b1b1b"/><ellipse cx="1012.30" cy="850.52" rx="3.85" ry="2.85" transform="rotate(-22 1012.30 850.52)" fill="#1b1b1b"/><ellipse cx="1012.30" cy="856.54" rx="3.85" ry="2.85" transform="rotate(-22 1012.30 856.54)" fill="#1b1b1b"/><ellipse cx="1012.30" cy="862.56" rx="3.85" ry="2.85" transform="rotate(-22 1012.30 862.56)" fill="#1b1b1b"/><ellipse cx="1012.30" cy="871.59" rx="3.85" ry="2.85" transform="rotate(-22 1012.30 871.59)" fill="#1b1b1b"/><ellipse cx="1012.30" cy="883.63" rx="3.85" ry="2.85" transform="rotate(-22 1012.30 883.63)" fill="#1b1b1b"/><line x1="1015.80" y1="822.60" x2="1015.80" y2="883.63" stroke="#1b1b1b" stroke-width="1.2"/><line x1="1049.90" y1="874.60" x2="1060.90" y2="874.60" stroke="#a9aaab" stroke-width="1"/><line x1="1049.90" y1="880.62" x2="1060.90" y2="880.62" stroke="#a9aaab" stroke-width="1"/><ellipse cx="1055.40" cy="841.49" rx="3.85" ry="2.85" transform="rotate(-22 1055.40 841.49)" fill="#1b1b1b"/><ellipse cx="1055.40" cy="850.52" rx="3.85" ry="2.85" transform="rotate(-22 1055.40 850.52)" fill="#1b1b1b"/><ellipse cx="1055.40" cy="856.54" rx="3.85" ry="2.85" transform="rotate(-22 1055.40 856.54)" fill="#1b1b1b"/><ellipse cx="1055.40" cy="862.56" rx="3.85" ry="2.85" transform="rotate(-22 1055.40 862.56)" fill="#1b1b1b"/><ellipse cx="1055.40" cy="871.59" rx="3.85" ry="2.85" transform="rotate(-22 1055.40 871.59)" fill="#1b1b1b"/><ellipse cx="1055.40" cy="883.63" rx="3.85" ry="2.85" transform="rotate(-22 1055.40 883.63)" fill="#1b1b1b"/><line x1="1058.90" y1="822.60" x2="1058.90" y2="883.63" stroke="#1b1b1b" stroke-width="1.2"/><polygon points="1015.20,822.60 1059.50,822.60 1059.50,825.50 1015.20,825.50" fill="#1b1b1b"/><text x="1001.00" y="814.00" font-family="Liberation Serif" font-size="11" font-weight="normal" font-style="italic" fill="#333" text-anchor="start" >rasg.</text><line x1="1025.00" y1="812.50" x2="1059.00" y2="812.50" stroke="#333" stroke-width="0.9" stroke-dasharray="2.8,2.6"/><line x1="1059.00" y1="810.00" x2="1059.00" y2="815.00" stroke="#333" stroke-width="0.9"/><line x1="1102" y1="844.50" x2="1102" y2="874.50" stroke="#3a3a3a" stroke-width="1.1"/><line x1="361.10" y1="774.40" x2="361.10" y2="813.40" stroke="#333" stroke-width="0.9"/><line x1="367.62" y1="774.40" x2="367.62" y2="813.40" stroke="#333" stroke-width="0.9"/><line x1="374.14" y1="774.40" x2="374.14" y2="813.40" stroke="#333" stroke-width="0.9"/><line x1="380.66" y1="774.40" x2="380.66" y2="813.40" stroke="#333" stroke-width="0.9"/><line x1="387.18" y1="774.40" x2="387.18" y2="813.40" stroke="#333" stroke-width="0.9"/><line x1="393.70" y1="774.40" x2="393.70" y2="813.40" stroke="#333" stroke-width="0.9"/><line x1="361.10" y1="774.40" x2="393.70" y2="774.40" stroke="#333" stroke-width="0.9"/><line x1="361.10" y1="782.20" x2="393.70" y2="782.20" stroke="#333" stroke-width="0.9"/><line x1="361.10" y1="790.00" x2="393.70" y2="790.00" stroke="#333" stroke-width="0.9"/><line x1="361.10" y1="797.80" x2="393.70" y2="797.80" stroke="#333" stroke-width="0.9"/><line x1="361.10" y1="805.60" x2="393.70" y2="805.60" stroke="#333" stroke-width="0.9"/><line x1="361.10" y1="813.40" x2="393.70" y2="813.40" stroke="#333" stroke-width="0.9"/><circle cx="367.62" cy="793.90" r="2.4" fill="#1b1b1b"/><circle cx="374.14" cy="793.90" r="2.4" fill="#1b1b1b"/><rect x="358.60" y="776.10" width="37.60" height="4.4" rx="2.2" fill="#1b1b1b"/><text x="367.10" y="760.50" font-family="Liberation Serif" font-size="13.6" font-weight="bold" font-style="normal" fill="#1b1b1b" text-anchor="start" >Am</text><text x="356.60" y="781.80" font-family="Liberation Serif" font-size="9" font-weight="normal" font-style="normal" fill="#444" text-anchor="middle" >5</text><line x1="736.10" y1="774.40" x2="736.10" y2="813.40" stroke="#333" stroke-width="0.9"/><line x1="742.46" y1="774.40" x2="742.46" y2="813.40" stroke="#333" stroke-width="0.9"/><line x1="748.82" y1="774.40" x2="748.82" y2="813.40" stroke="#333" stroke-width="0.9"/><line x1="755.18" y1="774.40" x2="755.18" y2="813.40" stroke="#333" stroke-width="0.9"/><line x1="761.54" y1="774.40" x2="761.54" y2="813.40" stroke="#333" stroke-width="0.9"/><line x1="767.90" y1="774.40" x2="767.90" y2="813.40" stroke="#333" stroke-width="0.9"/><line x1="736.10" y1="774.40" x2="767.90" y2="774.40" stroke="#333" stroke-width="0.9"/><line x1="736.10" y1="782.20" x2="767.90" y2="782.20" stroke="#333" stroke-width="0.9"/><line x1="736.10" y1="790.00" x2="767.90" y2="790.00" stroke="#333" stroke-width="0.9"/><line x1="736.10" y1="797.80" x2="767.90" y2="797.80" stroke="#333" stroke-width="0.9"/><line x1="736.10" y1="805.60" x2="767.90" y2="805.60" stroke="#333" stroke-width="0.9"/><line x1="736.10" y1="813.40" x2="767.90" y2="813.40" stroke="#333" stroke-width="0.9"/><rect x="735.60" y="772.40" width="32.80" height="2.4" fill="#1b1b1b"/><circle cx="742.46" cy="809.50" r="2.4" fill="#1b1b1b"/><circle cx="748.82" cy="809.50" r="2.4" fill="#1b1b1b"/><circle cx="755.18" cy="801.70" r="2.4" fill="#1b1b1b"/><rect x="733.60" y="791.70" width="36.80" height="4.4" rx="2.2" fill="#1b1b1b"/><text x="746.90" y="760.50" font-family="Liberation Serif" font-size="13.6" font-weight="bold" font-style="normal" fill="#1b1b1b" text-anchor="start" >G</text></svg></div></div><div class="a" style="left:216px;top:859px;width:1015px;height:15px;background:#fbfbfc;"></div><div class="a" style="left:1216px;top:95px;width:15px;height:764px;background:#fbfbfc;"></div><div class="a" style="left:1220px;top:98px;width:8px;height:238px;border-radius:4px;background:#c2c2c2"></div><div class="a" style="left:1231px;top:95px;width:327px;height:779px;background:#40444b;"></div><div class="a" style="left:1232px;top:95px;width:163px;height:21px;background:#4a88c8;"></div><div class="a" style="left:1395px;top:95px;width:163px;height:21px;background:#48566a;"></div><div class="t" style="left:1297px;top:99px;font-size:11px;color:#fff;font-weight:bold;font-family:"Liberation Sans",sans-serif;">SONG</div><div class="t" style="left:1461px;top:99px;font-size:11px;color:#fff;font-weight:bold;font-family:"Liberation Sans",sans-serif;">SPUR</div><div class="t" style="left:1240px;top:129px;font-size:17px;color:#8ec5e9;font-weight:bold;font-family:"Liberation Sans",sans-serif;">INFORMATION</div><div class="t" style="left:1240px;top:155px;font-size:12.5px;color:#fff;font-weight:normal;font-family:"Liberation Sans",sans-serif;">Titel:</div><div class="a" style="left:1240px;top:175px;width:310px;height:20px;background:#5b7893;border-radius:4px"></div><div class="t" style="left:1243px;top:179px;font-size:12.2px;color:#fff;font-weight:normal;font-family:"Liberation Sans",sans-serif;">FLAMENCO STYLE</div><div class="t" style="left:1240px;top:203px;font-size:12.5px;color:#fff;font-weight:normal;font-family:"Liberation Sans",sans-serif;">Künstler:</div><div class="a" style="left:1240px;top:223px;width:310px;height:20px;background:#5b7893;border-radius:4px"></div><div class="t" style="left:1243px;top:227px;font-size:12.2px;color:#aab6c3;font-weight:normal;font-family:"Liberation Sans",sans-serif;">Künstler</div><div class="t" style="left:1240px;top:251px;font-size:12.4px;color:#6d747d;font-weight:normal;font-family:"Liberation Sans",sans-serif;">Ctrl+Return für neue Zeile.</div><div class="a" style="left:1491px;top:249px;width:59px;height:18px;background:#48566a;border-radius:4px"></div><div class="t" style="left:1500px;top:252px;font-size:12.5px;color:#fff;font-weight:normal;font-family:"Liberation Sans",sans-serif;">Mehr</div><svg style="left:0px;top:0px" width="1558" height="943" viewBox="0 0 1558 943"><polygon points="1533,256 1541,256 1537,260.5" fill="#fff"/></svg><div class="t" style="left:1240px;top:280px;font-size:17px;color:#8ec5e9;font-weight:bold;font-family:"Liberation Sans",sans-serif;">NOTENSATZ</div><div class="t" style="left:1240px;top:307px;font-size:12.5px;color:#fff;font-weight:normal;font-family:"Liberation Sans",sans-serif;">Konzertklang:</div><div class="a" style="left:1323px;top:305px;width:32px;height:16px;background:#48566a;border-radius:8px"></div><div class="a" style="left:1326.5px;top:308.5px;width:9px;height:9px;border-radius:50%;background:#fff"></div><div class="t" style="left:1364px;top:307px;font-size:12.5px;color:#fff;font-weight:normal;font-family:"Liberation Sans",sans-serif;">Aus</div><div class="t" style="left:1255px;top:332px;font-size:12.5px;color:#fff;font-weight:normal;font-family:"Liberation Sans",sans-serif;">Stylesheet:</div><div class="a" style="left:1323px;top:327px;width:65px;height:22px;background:#48566a;border-radius:4px"></div><div class="t" style="left:1331px;top:332px;font-size:12.5px;color:#fff;font-weight:normal;font-family:"Liberation Sans",sans-serif;">Öffnen...</div><div class="t" style="left:1240px;top:378px;font-size:17px;color:#8ec5e9;font-weight:bold;font-family:"Liberation Sans",sans-serif;">SOUNDMASTERING</div><div class="t" style="left:1240px;top:404px;font-size:12.4px;color:#fff;font-weight:normal;font-family:"Liberation Sans",sans-serif;">Mastering für alle Spuren einrichten</div><div class="a" style="left:1240px;top:424px;width:310px;height:22px;background:#48566a;border-radius:4px"></div><div class="a" style="left:1262px;top:424px;width:1px;height:22px;background:#3d4756;"></div><div class="a" style="left:1504px;top:424px;width:1px;height:22px;background:#3d4756;"></div><div class="a" style="left:1527px;top:424px;width:1px;height:22px;background:#3d4756;"></div><div class="t" style="left:1273px;top:429px;font-size:12.5px;color:#fff;font-weight:normal;font-family:"Liberation Sans",sans-serif;">Analog</div><div class="a" style="left:1240px;top:448px;width:310px;height:22px;background:#48566a;border-radius:4px"></div><div class="a" style="left:1262px;top:448px;width:1px;height:22px;background:#3d4756;"></div><div class="a" style="left:1504px;top:448px;width:1px;height:22px;background:#3d4756;"></div><div class="a" style="left:1527px;top:448px;width:1px;height:22px;background:#3d4756;"></div><div class="t" style="left:1273px;top:453px;font-size:12.5px;color:#fff;font-weight:normal;font-family:"Liberation Sans",sans-serif;">Studio</div><div class="a" style="left:1240px;top:472px;width:310px;height:22px;background:#48566a;border-radius:4px"></div><div class="a" style="left:1262px;top:472px;width:1px;height:22px;background:#3d4756;"></div><div class="a" style="left:1504px;top:472px;width:1px;height:22px;background:#3d4756;"></div><div class="a" style="left:1527px;top:472px;width:1px;height:22px;background:#3d4756;"></div><div class="t" style="left:1273px;top:477px;font-size:12.5px;color:#fff;font-weight:normal;font-family:"Liberation Sans",sans-serif;">10-Band</div><svg style="left:0px;top:0px" width="1558" height="943" viewBox="0 0 1558 943"><rect x="1243" y="431.5" width="15.5" height="7" fill="#fff" rx="0.5"/><path d="M1244.5,436.5 Q1247,432.5 1249.5,436.5 M1252,432.5 L1252,437.5 M1255,432.5 L1255,437.5" stroke="#48566a" stroke-width="1" fill="none"/><polyline points="1485,433 1488,430 1491,433" fill="none" stroke="#fff" stroke-width="1.2"/><polyline points="1485,437 1488,440 1491,437" fill="none" stroke="#fff" stroke-width="1.2"/><path d="M1512.7,430.5 A6,6 0 1 0 1519.3,430.5" fill="none" stroke="#5d6b7d" stroke-width="1.3"/><line x1="1516" y1="428" x2="1516" y2="435" stroke="#5d6b7d" stroke-width="1.3"/><circle cx="1539" cy="431" r="1.2" fill="#fff"/><circle cx="1539" cy="435" r="1.2" fill="#fff"/><circle cx="1539" cy="439" r="1.2" fill="#fff"/><rect x="1243" y="455.5" width="15.5" height="7" fill="#fff" rx="0.5"/><path d="M1244.5,460.5 Q1247,456.5 1249.5,460.5 M1252,456.5 L1252,461.5 M1255,456.5 L1255,461.5" stroke="#48566a" stroke-width="1" fill="none"/><polyline points="1485,457 1488,454 1491,457" fill="none" stroke="#fff" stroke-width="1.2"/><polyline points="1485,461 1488,464 1491,461" fill="none" stroke="#fff" stroke-width="1.2"/><path d="M1512.7,454.5 A6,6 0 1 0 1519.3,454.5" fill="none" stroke="#5d6b7d" stroke-width="1.3"/><line x1="1516" y1="452" x2="1516" y2="459" stroke="#5d6b7d" stroke-width="1.3"/><circle cx="1539" cy="455" r="1.2" fill="#fff"/><circle cx="1539" cy="459" r="1.2" fill="#fff"/><circle cx="1539" cy="463" r="1.2" fill="#fff"/><rect x="1243" y="479.5" width="15.5" height="7" fill="#fff" rx="0.5"/><path d="M1244.5,484.5 Q1247,480.5 1249.5,484.5 M1252,480.5 L1252,485.5 M1255,480.5 L1255,485.5" stroke="#48566a" stroke-width="1" fill="none"/><polyline points="1485,481 1488,478 1491,481" fill="none" stroke="#fff" stroke-width="1.2"/><polyline points="1485,485 1488,488 1491,485" fill="none" stroke="#fff" stroke-width="1.2"/><path d="M1512.7,478.5 A6,6 0 1 0 1519.3,478.5" fill="none" stroke="#5d6b7d" stroke-width="1.3"/><line x1="1516" y1="476" x2="1516" y2="483" stroke="#5d6b7d" stroke-width="1.3"/><circle cx="1539" cy="479" r="1.2" fill="#fff"/><circle cx="1539" cy="483" r="1.2" fill="#fff"/><circle cx="1539" cy="487" r="1.2" fill="#fff"/></svg><div class="a" style="left:0px;top:874px;width:1558px;height:69px;background:#3a3e45;"></div><div class="a" style="left:0px;top:874px;width:1558px;height:1px;background:#24272b;"></div><div class="a" style="left:0px;top:895px;width:529px;height:24px;background:#50555d;"></div><div class="a" style="left:778px;top:895px;width:780px;height:24px;background:#42464e;"></div><div class="a" style="left:0px;top:895px;width:4px;height:24px;background:#f0706a;"></div><div class="t" style="left:47px;top:879px;font-size:12.5px;color:#fff;font-weight:normal;font-family:"Liberation Sans",sans-serif;">Spuren</div><div class="t" style="left:34px;top:901px;font-size:12.5px;color:#8b9199;font-weight:normal;font-family:"Liberation Sans",sans-serif;">1.</div><div class="t" style="left:47px;top:901px;font-size:12.5px;color:#fff;font-weight:normal;font-family:"Liberation Sans",sans-serif;">Nylon Guitar</div><div class="t" style="left:47px;top:925px;font-size:12.5px;color:#fff;font-weight:normal;font-family:"Liberation Sans",sans-serif;">Master</div><div class="t" style="left:348px;top:879px;font-size:12.5px;color:#fff;font-weight:normal;font-family:"Liberation Sans",sans-serif;">Vol.</div><div class="t" style="left:453px;top:879px;font-size:12.5px;color:#fff;font-weight:normal;font-family:"Liberation Sans",sans-serif;">Pan.</div><div class="t" style="left:498px;top:879px;font-size:12.5px;color:#fff;font-weight:normal;font-family:"Liberation Sans",sans-serif;">Eq.</div><div class="t" style="left:537px;top:879px;font-size:11px;color:#fff;font-weight:normal;font-family:"Liberation Sans",sans-serif;">1</div><div class="t" style="left:612px;top:879px;font-size:11px;color:#fff;font-weight:normal;font-family:"Liberation Sans",sans-serif;">4</div><div class="t" style="left:712px;top:879px;font-size:11px;color:#fff;font-weight:normal;font-family:"Liberation Sans",sans-serif;">8</div><svg style="left:0px;top:0px" width="1558" height="943" viewBox="0 0 1558 943"><circle cx="99" cy="880.5" r="1.1" fill="#fff"/><circle cx="99" cy="885" r="1.1" fill="#fff"/><circle cx="99" cy="889.5" r="1.1" fill="#fff"/><polygon points="537.5,875 545,875 541.25,879" fill="#4a8bd0"/><path d="M14,900.5 Q18,898 22,900.5 L22,911 L20.3,915 L15.7,915 L14,911 Z" fill="#fff"/><line x1="16.6" y1="901.5" x2="16.6" y2="912" stroke="#50555d" stroke-width="0.8"/><line x1="19.4" y1="901.5" x2="19.4" y2="912" stroke="#50555d" stroke-width="0.8"/><rect x="11" y="902" width="2" height="1.8" fill="#fff"/><rect x="23" y="902" width="2" height="1.8" fill="#fff"/><rect x="11" y="905.5" width="2" height="1.8" fill="#fff"/><rect x="23" y="905.5" width="2" height="1.8" fill="#fff"/><rect x="11" y="909" width="2" height="1.8" fill="#fff"/><rect x="23" y="909" width="2" height="1.8" fill="#fff"/><path d="M205,907 Q213,899 221,907 Q213,915 205,907 Z" fill="#fff"/><circle cx="213" cy="907" r="2.6" fill="#50555d"/><circle cx="213" cy="907" r="1.2" fill="#fff"/><polygon points="238,882 242,882 248,877 248,892 242,887 238,887" fill="#4b6274"/><line x1="236" y1="893" x2="251" y2="877" stroke="#3a3e45" stroke-width="2.2"/><line x1="237" y1="892" x2="251" y2="877" stroke="#4b6274" stroke-width="0.9"/><path d="M259,890 L259,885 Q259,877 265,877 Q271,877 271,885 L271,890" fill="none" stroke="#4b6274" stroke-width="2"/><rect x="257" y="886" width="4" height="6" rx="1.5" fill="#4b6274"/><rect x="269" y="886" width="4" height="6" rx="1.5" fill="#4b6274"/><polygon points="238,904 242,904 248,899 248,914 242,909 238,909" fill="#4b6274"/><line x1="236" y1="915" x2="251" y2="899" stroke="#50555d" stroke-width="2.2"/><line x1="237" y1="914" x2="251" y2="899" stroke="#4b6274" stroke-width="0.9"/><path d="M259,912 L259,907 Q259,899 265,899 Q271,899 271,907 L271,912" fill="none" stroke="#4b6274" stroke-width="2"/><rect x="257" y="908" width="4" height="6" rx="1.5" fill="#4b6274"/><rect x="269" y="908" width="4" height="6" rx="1.5" fill="#4b6274"/><rect x="284" y="903" width="115" height="8" fill="#33373d"/><rect x="401" y="903" width="10.5" height="8" fill="#33373d"/><rect x="284" y="926.5" width="115" height="8" fill="#363a40"/><rect x="401" y="926.5" width="10.5" height="8" fill="#363a40"/><rect x="367" y="898" width="5" height="18" fill="#e6e6e6"/><rect x="367" y="922" width="5" height="17.5" fill="#e6e6e6"/><path d="M419,913 L423.5,903 L426.5,903 L431,913 L428,913 L427,910.5 L423,910.5 L422,913 Z" fill="#30343a"/><path d="M474.5,913 L479.0,903 L482.0,903 L486.5,913 L483.5,913 L482.5,910.5 L478.5,910.5 L477.5,913 Z" fill="#30343a"/><path d="M419,936.5 L423.5,926.5 L426.5,926.5 L431,936.5 L428,936.5 L427,934.0 L423,934.0 L422,936.5 Z" fill="#383c43"/><path d="M474.5,936.5 L479.0,926.5 L482.0,926.5 L486.5,936.5 L483.5,936.5 L482.5,934.0 L478.5,934.0 L477.5,936.5 Z" fill="#383c43"/><circle cx="456.3" cy="906.5" r="7.5" fill="#2d3136"/><path d="M449.6,910.7 A7.8,7.8 0 0 1 456.3,898.7" fill="none" stroke="#4a8bd0" stroke-width="1.7"/><line x1="456.3" y1="899.5" x2="456.3" y2="904.0" stroke="#fff" stroke-width="1.5"/><circle cx="456.3" cy="930" r="7.5" fill="#2d3136"/><path d="M449.6,934.2 A7.8,7.8 0 0 1 456.3,922.2" fill="none" stroke="#4a8bd0" stroke-width="1.7"/><line x1="456.3" y1="923" x2="456.3" y2="927.5" stroke="#fff" stroke-width="1.5"/><g stroke="#4d6a80" stroke-width="1.3"><line x1="503" y1="900" x2="503" y2="914"/><line x1="508" y1="900" x2="508" y2="914"/><line x1="513" y1="900" x2="513" y2="914"/></g><g fill="#4d6a80"><rect x="501" y="908" width="4" height="2"/><rect x="506" y="903" width="4" height="2"/><rect x="511" y="906" width="4" height="2"/></g><rect x="529" y="895" width="249" height="24" fill="#f07470"/><rect x="553.9" y="895" width="1" height="24" fill="#f6aaa4"/><rect x="578.8" y="895" width="1" height="24" fill="#f6aaa4"/><rect x="603.7" y="895" width="1" height="24" fill="#f6aaa4"/><rect x="628.6" y="895" width="1" height="24" fill="#f6aaa4"/><rect x="653.5" y="895" width="1" height="24" fill="#f6aaa4"/><rect x="678.4" y="895" width="1" height="24" fill="#f6aaa4"/><rect x="703.3" y="895" width="1" height="24" fill="#f6aaa4"/><rect x="728.2" y="895" width="1" height="24" fill="#f6aaa4"/><rect x="753.1" y="895" width="1" height="24" fill="#f6aaa4"/><rect x="533" y="899" width="16" height="16" rx="2.5" fill="#2a2a2b"/></svg><svg style="left:0;top:0" width="1558" height="943" viewBox="0 0 1558 943"><path d="M0,938 A5,5 0 0 0 5,943 L0,943 Z" fill="#ffffff"/><path d="M1558,938 A5,5 0 0 1 1553,943 L1558,943 Z" fill="#ffffff"/></svg>
</body></html>
